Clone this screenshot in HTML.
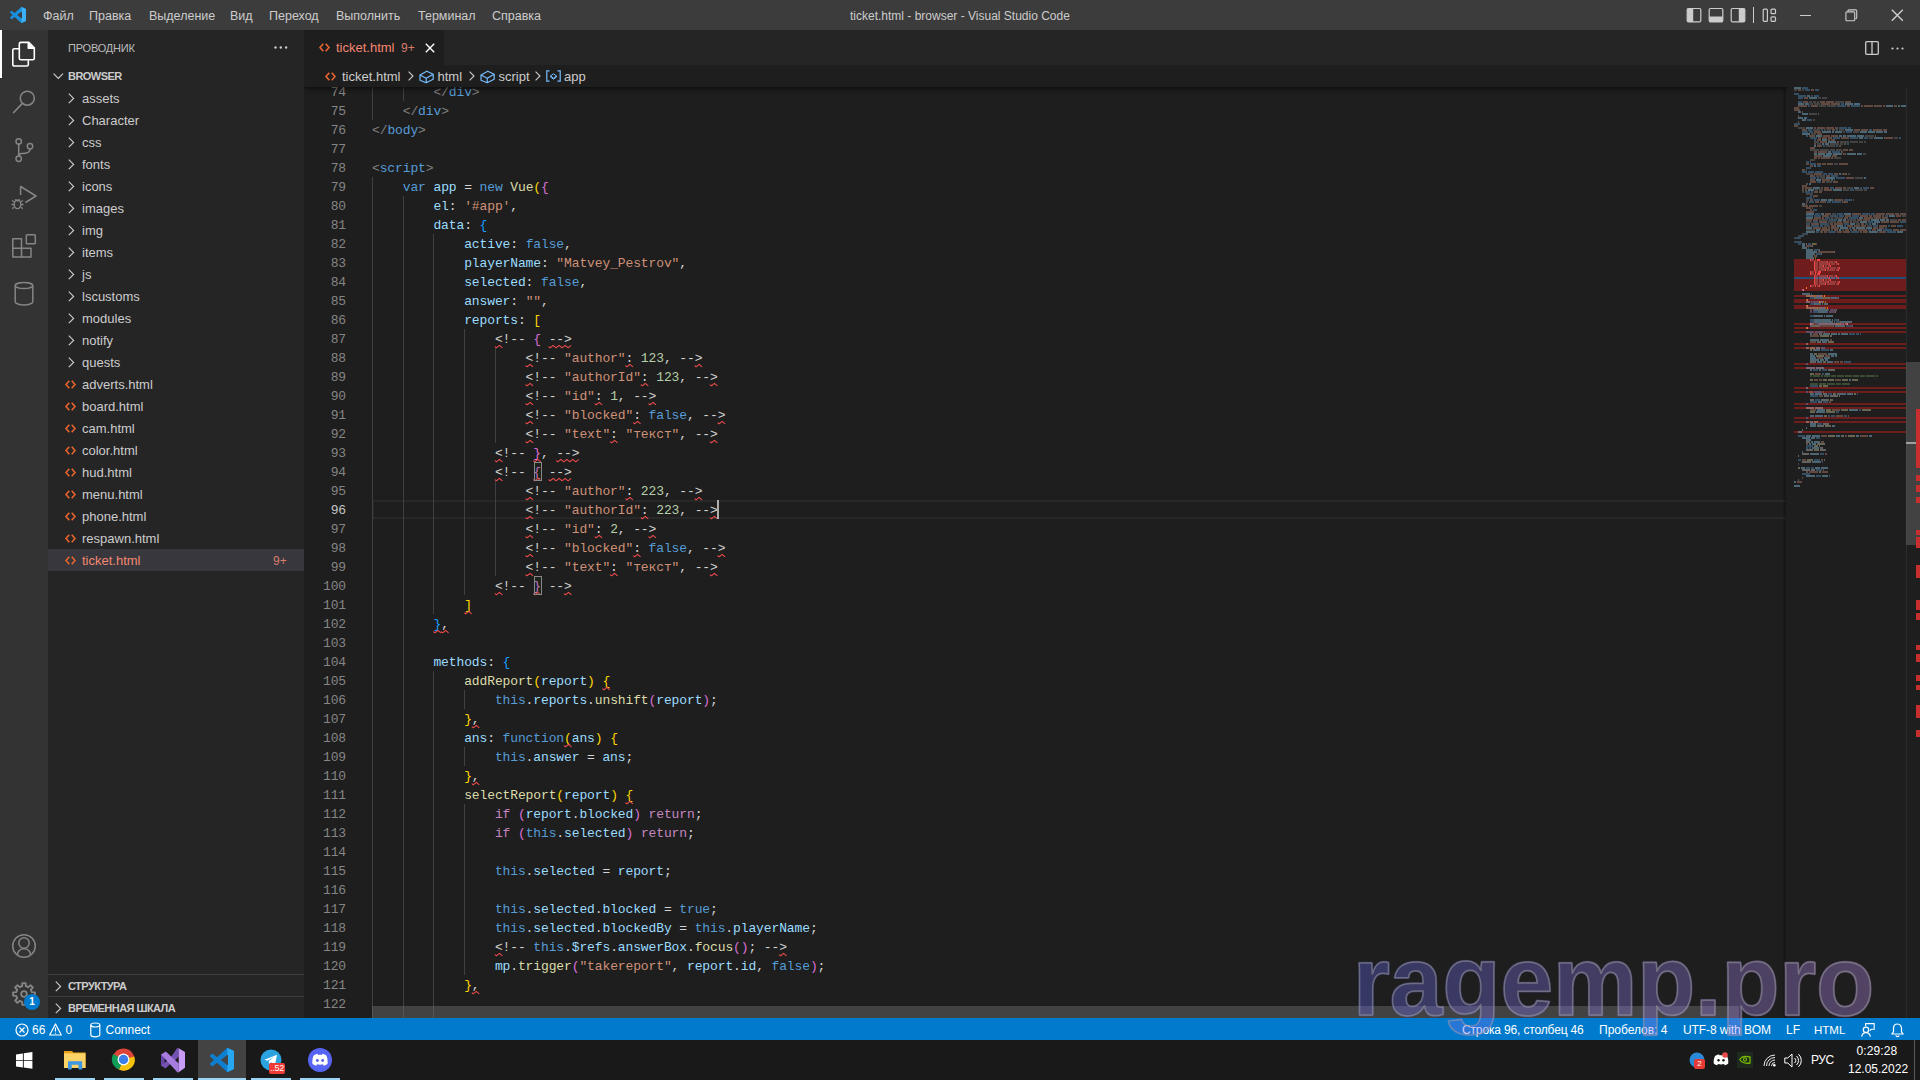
<!DOCTYPE html><html><head><meta charset="utf-8"><style>
*{box-sizing:border-box;margin:0;padding:0}
html,body{width:1920px;height:1080px;overflow:hidden;background:#1e1e1e;font-family:"Liberation Sans",sans-serif;color:#cccccc}
.abs{position:absolute}
svg{position:absolute;overflow:visible}
.t{position:absolute;white-space:nowrap}
#title{left:0;top:0;width:1920px;height:30px;background:#3c3c3c;font-size:12.5px;color:#cccccc}
#act{left:0;top:30px;width:48px;height:988px;background:#333333}
#side{left:48px;top:30px;width:256px;height:988px;background:#252526;font-size:13px;color:#cccccc}
#tabs{left:304px;top:30px;width:1616px;height:35px;background:#252526}
#crumbs{left:304px;top:65px;width:1616px;height:22px;background:#1e1e1e;font-size:13px;color:#cccccc}
#editor{left:304px;top:87px;width:1616px;height:931px;background:#1e1e1e;overflow:hidden}
.ln{position:absolute;left:0;width:42px;text-align:right;height:19px;line-height:19px;font-family:"Liberation Mono",monospace;font-size:13px;color:#858585;letter-spacing:-0.12px}
.ln.act{color:#c6c6c6}
.cl{position:absolute;height:19px;line-height:19px;white-space:pre;font-family:"Liberation Mono",monospace;font-size:13px;letter-spacing:-0.12px;color:#d4d4d4}
.ig{position:absolute;width:1px;height:19px;background:#404040}
.p{color:#d4d4d4}.tb{color:#808080}.tag{color:#569cd6}.kw{color:#569cd6}.ctl{color:#c586c0}.var{color:#9cdcfe}
.fn{color:#dcdcaa}.str{color:#ce9178}.num{color:#b5cea8}.b1{color:#ffd700}.b2{color:#da70d6}.b3{color:#179fff}
#status{left:0;top:1018px;width:1920px;height:22px;background:#007acc;color:#fff;font-size:12px}
#task{left:0;top:1040px;width:1920px;height:40px;background:#191919}
</style></head><body>
<div id="title" class="abs">
<svg style="left:10px;top:7px" width="16" height="16" viewBox="0 0 100 100"><defs><clipPath id="vcr1"><rect x="72" y="0" width="30" height="100"/></clipPath></defs><path fill="#1a8fdd" d="M96.46 10.8 75.86.87a6.23 6.23 0 0 0-7.1 1.2L29.35 38.04 12.19 25.01a4.16 4.16 0 0 0-5.32.24L1.36 30.26a4.17 4.17 0 0 0 0 6.16L16.24 50 1.36 63.58a4.17 4.17 0 0 0 0 6.16l5.51 5.01a4.16 4.16 0 0 0 5.32.24l17.16-13.03 39.41 35.97a6.23 6.23 0 0 0 7.1 1.2l20.6-9.92A6.25 6.25 0 0 0 100 83.6V16.4a6.25 6.25 0 0 0-3.54-5.6zM75.02 72.7 45.11 50l29.91-22.7z"/><path fill="#3bb0f5" clip-path="url(#vcr1)" d="M96.46 10.8 75.86.87a6.23 6.23 0 0 0-7.1 1.2L29.35 38.04 12.19 25.01a4.16 4.16 0 0 0-5.32.24L1.36 30.26a4.17 4.17 0 0 0 0 6.16L16.24 50 1.36 63.58a4.17 4.17 0 0 0 0 6.16l5.51 5.01a4.16 4.16 0 0 0 5.32.24l17.16-13.03 39.41 35.97a6.23 6.23 0 0 0 7.1 1.2l20.6-9.92A6.25 6.25 0 0 0 100 83.6V16.4a6.25 6.25 0 0 0-3.54-5.6zM75.02 72.7 45.11 50l29.91-22.7z"/></svg>
<div class="t" style="left:43.0px;top:6.0px;height:20px;line-height:20px;font-size:12.5px">Файл</div>
<div class="t" style="left:89.0px;top:6.0px;height:20px;line-height:20px;font-size:12.5px">Правка</div>
<div class="t" style="left:149.0px;top:6.0px;height:20px;line-height:20px;font-size:12.5px">Выделение</div>
<div class="t" style="left:230.0px;top:6.0px;height:20px;line-height:20px;font-size:12.5px">Вид</div>
<div class="t" style="left:269.0px;top:6.0px;height:20px;line-height:20px;font-size:12.5px">Переход</div>
<div class="t" style="left:336.0px;top:6.0px;height:20px;line-height:20px;font-size:12.5px">Выполнить</div>
<div class="t" style="left:418.0px;top:6.0px;height:20px;line-height:20px;font-size:12.5px">Терминал</div>
<div class="t" style="left:492.0px;top:6.0px;height:20px;line-height:20px;font-size:12.5px">Справка</div>
<div class="t" style="left:850.0px;top:6.0px;height:20px;line-height:20px;font-size:12.0px">ticket.html - browser - Visual Studio Code</div>
<svg style="left:1686px;top:7px" width="16" height="16" viewBox="0 0 16 16"><rect x="1.2" y="1.5" width="13.6" height="13.4" rx="1.3" fill="none" stroke="#cccccc" stroke-width="1.2"/><rect x="1.2" y="1.5" width="6" height="13.4" fill="#cccccc"/></svg>
<svg style="left:1708px;top:7px" width="16" height="16" viewBox="0 0 16 16"><rect x="1.2" y="1.5" width="13.6" height="13.4" rx="1.3" fill="none" stroke="#cccccc" stroke-width="1.2"/><rect x="1.2" y="9.5" width="13.6" height="5.4" fill="#cccccc"/></svg>
<svg style="left:1730px;top:7px" width="16" height="16" viewBox="0 0 16 16"><rect x="1.2" y="1.5" width="13.6" height="13.4" rx="1.3" fill="none" stroke="#cccccc" stroke-width="1.2"/><rect x="8.8" y="1.5" width="6" height="13.4" fill="#cccccc"/></svg>
<div class="abs" style="left:1753px;top:7px;width:1px;height:16px;background:#cccccc"></div>
<svg style="left:1762px;top:7px" width="16" height="16" viewBox="0 0 16 16"><rect x="1.2" y="2.2" width="4.2" height="12.2" rx="1" fill="none" stroke="#cccccc" stroke-width="1.2"/><rect x="9" y="2.2" width="4.5" height="4.5" rx="1" fill="none" stroke="#cccccc" stroke-width="1.2"/><rect x="9" y="9.8" width="4.5" height="4.5" rx="1" fill="none" stroke="#cccccc" stroke-width="1.2"/></svg>
<div class="abs" style="left:1800px;top:15px;width:11px;height:1px;background:#cccccc"></div>
<svg style="left:1845px;top:9px" width="13" height="13" viewBox="0 0 13 13"><rect x="0.9" y="2.9" width="8.8" height="8.8" rx="1" fill="none" stroke="#cccccc" stroke-width="1.1"/><path d="M2.9 2.4 V1.9 A1 1 0 0 1 3.9 0.9 H10.7 A1 1 0 0 1 11.7 1.9 V8.7 A1 1 0 0 1 10.7 9.7 H10.2" fill="none" stroke="#cccccc" stroke-width="1.1"/></svg>
<svg style="left:1891px;top:9px" width="13" height="13" viewBox="0 0 13 13"><path d="M0.8 0.8 L11.8 11.8 M11.8 0.8 L0.8 11.8" stroke="#cccccc" stroke-width="1.4"/></svg>
</div>
<div id="act" class="abs">
<div class="abs" style="left:0;top:0;width:2px;height:48px;background:#fff"></div>
<svg style="left:12px;top:12px" width="24" height="24" viewBox="0 0 24 24"><path d="M7.5 6.8 H2.3 A1.5 1.5 0 0 0 0.8 8.3 V22.5 A1.5 1.5 0 0 0 2.3 24 H14.8 A1.5 1.5 0 0 0 16.3 22.5 V18.2" fill="none" stroke="#ffffff" stroke-width="1.6"/><path d="M8.8 0.4 H16.8 L22.3 5.9 V16.2 A1.5 1.5 0 0 1 20.8 17.7 H8.8 A1.5 1.5 0 0 1 7.3 16.2 V1.9 A1.5 1.5 0 0 1 8.8 0.4 Z M16.3 0.6 V6.3 H22" fill="none" stroke="#ffffff" stroke-width="1.6" stroke-linejoin="round"/><path d="M16.3 0.6 L22 6.3 H16.3 Z" fill="#ffffff"/></svg>
<svg style="left:12px;top:60px" width="24" height="24" viewBox="0 0 24 24"><circle cx="15.3" cy="8.2" r="7" fill="none" stroke="#858585" stroke-width="1.6"/><path d="M10.4 13.3 L1.2 23" stroke="#858585" stroke-width="1.7"/></svg>
<svg style="left:12px;top:108px" width="24" height="24" viewBox="0 0 24 24"><circle cx="6.7" cy="3.4" r="2.7" fill="none" stroke="#858585" stroke-width="1.5"/><circle cx="6.7" cy="20.7" r="2.7" fill="none" stroke="#858585" stroke-width="1.5"/><circle cx="18" cy="8.2" r="2.7" fill="none" stroke="#858585" stroke-width="1.5"/><path d="M6.7 6.1 V18 M18 10.9 C18 14.5 15 15.5 10 15.5 C8 15.5 6.7 16.5 6.7 18" fill="none" stroke="#858585" stroke-width="1.5"/></svg>
<svg style="left:12px;top:156px" width="24" height="24" viewBox="0 0 24 24"><path d="M8.6 9 V0.5 L24 10 L13.5 16.5" fill="none" stroke="#858585" stroke-width="1.5" stroke-linejoin="round"/><ellipse cx="5.5" cy="18.3" rx="3.3" ry="4.3" fill="none" stroke="#858585" stroke-width="1.4"/><path d="M0 14.5 L2.3 15.8 M11 14.5 L8.7 15.8 M-0.5 18.5 H2.2 M11.5 18.5 H8.8 M0 22.5 L2.3 21.3 M11 22.5 L8.7 21.3 M3 13.5 L5.5 15 L8 13.5" fill="none" stroke="#858585" stroke-width="1.3"/></svg>
<svg style="left:12px;top:204px" width="24" height="24" viewBox="0 0 24 24"><path d="M0.8 4.8 H9.5 V14.2 H19 V23 H0.8 Z M0.8 14.2 H9.5 V23" fill="none" stroke="#858585" stroke-width="1.5" stroke-linejoin="round"/><rect x="14.3" y="0.8" width="9" height="9" rx="0.8" fill="none" stroke="#858585" stroke-width="1.5"/></svg>
<svg style="left:12px;top:252px" width="24" height="24" viewBox="0 0 24 24"><ellipse cx="12" cy="3.6" rx="8.8" ry="3" fill="none" stroke="#858585" stroke-width="1.5"/><path d="M3.2 3.6 V19.8 C3.2 21.6 7.2 23 12 23 C16.8 23 20.8 21.6 20.8 19.8 V3.6" fill="none" stroke="#858585" stroke-width="1.5"/></svg>
<svg style="left:12px;top:904px" width="24" height="24" viewBox="0 0 24 24"><circle cx="12" cy="12" r="11.3" fill="none" stroke="#858585" stroke-width="1.5"/><circle cx="12" cy="9" r="5.2" fill="none" stroke="#858585" stroke-width="1.5"/><path d="M5.3 20.8 C6 16.8 8.5 14.8 12 14.8 C15.5 14.8 18 16.8 18.7 20.8" fill="none" stroke="#858585" stroke-width="1.5"/></svg>
<svg style="left:12px;top:952px" width="24" height="24" viewBox="0 0 24 24"><path d="M10.13 4.22 L10.36 1.12 L13.64 1.12 L13.87 4.22 L16.18 5.18 L18.54 3.15 L20.85 5.46 L18.82 7.82 L19.78 10.13 L22.88 10.36 L22.88 13.64 L19.78 13.87 L18.82 16.18 L20.85 18.54 L18.54 20.85 L16.18 18.82 L13.87 19.78 L13.64 22.88 L10.36 22.88 L10.13 19.78 L7.82 18.82 L5.46 20.85 L3.15 18.54 L5.18 16.18 L4.22 13.87 L1.12 13.64 L1.12 10.36 L4.22 10.13 L5.18 7.82 L3.15 5.46 L5.46 3.15 L7.82 5.18 Z" fill="none" stroke="#858585" stroke-width="1.9" stroke-linejoin="round"/><circle cx="12" cy="12" r="2.8" fill="none" stroke="#858585" stroke-width="1.8"/></svg>
<div class="abs" style="left:24px;top:964px;width:16px;height:16px;border-radius:8px;background:#007acc;color:#fff;font-size:10px;font-weight:bold;line-height:16px;text-align:center">1</div>
</div>
<div id="side" class="abs">
<div class="t" style="left:20.0px;top:8.0px;height:20px;line-height:20px;font-size:11.0px;color:#bbbbbb;letter-spacing:-0.2px">ПРОВОДНИК</div>
<svg style="left:226px;top:16px" width="14" height="3" viewBox="0 0 14 3"><circle cx="1.5" cy="1.5" r="1.2" fill="#cccccc"/><circle cx="6.8" cy="1.5" r="1.2" fill="#cccccc"/><circle cx="12.1" cy="1.5" r="1.2" fill="#cccccc"/></svg>
<svg style="left:5px;top:43px" width="11" height="6" viewBox="0 0 11 6"><path d="M0.6 0.6 L5.3 5.3 L10 0.6" fill="none" stroke="#cccccc" stroke-width="1.2"/></svg>
<div class="t" style="left:20.0px;top:36.0px;height:20px;line-height:20px;font-size:11.0px;color:#cccccc;font-weight:bold;letter-spacing:-0.55px">BROWSER</div>
<svg style="left:20px;top:63px" width="7" height="11" viewBox="0 0 7 11"><path d="M0.8 0.6 L5.6 5.4 L0.8 10.2" fill="none" stroke="#cccccc" stroke-width="1.2"/></svg>
<div class="t" style="left:34.0px;top:58.5px;height:20px;line-height:20px;font-size:13.0px">assets</div>
<svg style="left:20px;top:85px" width="7" height="11" viewBox="0 0 7 11"><path d="M0.8 0.6 L5.6 5.4 L0.8 10.2" fill="none" stroke="#cccccc" stroke-width="1.2"/></svg>
<div class="t" style="left:34.0px;top:80.5px;height:20px;line-height:20px;font-size:13.0px">Character</div>
<svg style="left:20px;top:107px" width="7" height="11" viewBox="0 0 7 11"><path d="M0.8 0.6 L5.6 5.4 L0.8 10.2" fill="none" stroke="#cccccc" stroke-width="1.2"/></svg>
<div class="t" style="left:34.0px;top:102.5px;height:20px;line-height:20px;font-size:13.0px">css</div>
<svg style="left:20px;top:129px" width="7" height="11" viewBox="0 0 7 11"><path d="M0.8 0.6 L5.6 5.4 L0.8 10.2" fill="none" stroke="#cccccc" stroke-width="1.2"/></svg>
<div class="t" style="left:34.0px;top:124.5px;height:20px;line-height:20px;font-size:13.0px">fonts</div>
<svg style="left:20px;top:151px" width="7" height="11" viewBox="0 0 7 11"><path d="M0.8 0.6 L5.6 5.4 L0.8 10.2" fill="none" stroke="#cccccc" stroke-width="1.2"/></svg>
<div class="t" style="left:34.0px;top:146.5px;height:20px;line-height:20px;font-size:13.0px">icons</div>
<svg style="left:20px;top:173px" width="7" height="11" viewBox="0 0 7 11"><path d="M0.8 0.6 L5.6 5.4 L0.8 10.2" fill="none" stroke="#cccccc" stroke-width="1.2"/></svg>
<div class="t" style="left:34.0px;top:168.5px;height:20px;line-height:20px;font-size:13.0px">images</div>
<svg style="left:20px;top:195px" width="7" height="11" viewBox="0 0 7 11"><path d="M0.8 0.6 L5.6 5.4 L0.8 10.2" fill="none" stroke="#cccccc" stroke-width="1.2"/></svg>
<div class="t" style="left:34.0px;top:190.5px;height:20px;line-height:20px;font-size:13.0px">img</div>
<svg style="left:20px;top:217px" width="7" height="11" viewBox="0 0 7 11"><path d="M0.8 0.6 L5.6 5.4 L0.8 10.2" fill="none" stroke="#cccccc" stroke-width="1.2"/></svg>
<div class="t" style="left:34.0px;top:212.5px;height:20px;line-height:20px;font-size:13.0px">items</div>
<svg style="left:20px;top:239px" width="7" height="11" viewBox="0 0 7 11"><path d="M0.8 0.6 L5.6 5.4 L0.8 10.2" fill="none" stroke="#cccccc" stroke-width="1.2"/></svg>
<div class="t" style="left:34.0px;top:234.5px;height:20px;line-height:20px;font-size:13.0px">js</div>
<svg style="left:20px;top:261px" width="7" height="11" viewBox="0 0 7 11"><path d="M0.8 0.6 L5.6 5.4 L0.8 10.2" fill="none" stroke="#cccccc" stroke-width="1.2"/></svg>
<div class="t" style="left:34.0px;top:256.5px;height:20px;line-height:20px;font-size:13.0px">lscustoms</div>
<svg style="left:20px;top:283px" width="7" height="11" viewBox="0 0 7 11"><path d="M0.8 0.6 L5.6 5.4 L0.8 10.2" fill="none" stroke="#cccccc" stroke-width="1.2"/></svg>
<div class="t" style="left:34.0px;top:278.5px;height:20px;line-height:20px;font-size:13.0px">modules</div>
<svg style="left:20px;top:305px" width="7" height="11" viewBox="0 0 7 11"><path d="M0.8 0.6 L5.6 5.4 L0.8 10.2" fill="none" stroke="#cccccc" stroke-width="1.2"/></svg>
<div class="t" style="left:34.0px;top:300.5px;height:20px;line-height:20px;font-size:13.0px">notify</div>
<svg style="left:20px;top:327px" width="7" height="11" viewBox="0 0 7 11"><path d="M0.8 0.6 L5.6 5.4 L0.8 10.2" fill="none" stroke="#cccccc" stroke-width="1.2"/></svg>
<div class="t" style="left:34.0px;top:322.5px;height:20px;line-height:20px;font-size:13.0px">quests</div>
<svg style="left:17px;top:350px" width="11" height="9" viewBox="0 0 11 9"><path d="M4.3 0.8 L1 4.5 L4.3 8.2 M6.7 0.8 L10 4.5 L6.7 8.2" fill="none" stroke="#e8642c" stroke-width="1.6" stroke-linecap="butt" stroke-linejoin="miter"/></svg>
<div class="t" style="left:34.0px;top:344.5px;height:20px;line-height:20px;font-size:13.0px">adverts.html</div>
<svg style="left:17px;top:372px" width="11" height="9" viewBox="0 0 11 9"><path d="M4.3 0.8 L1 4.5 L4.3 8.2 M6.7 0.8 L10 4.5 L6.7 8.2" fill="none" stroke="#e8642c" stroke-width="1.6" stroke-linecap="butt" stroke-linejoin="miter"/></svg>
<div class="t" style="left:34.0px;top:366.5px;height:20px;line-height:20px;font-size:13.0px">board.html</div>
<svg style="left:17px;top:394px" width="11" height="9" viewBox="0 0 11 9"><path d="M4.3 0.8 L1 4.5 L4.3 8.2 M6.7 0.8 L10 4.5 L6.7 8.2" fill="none" stroke="#e8642c" stroke-width="1.6" stroke-linecap="butt" stroke-linejoin="miter"/></svg>
<div class="t" style="left:34.0px;top:388.5px;height:20px;line-height:20px;font-size:13.0px">cam.html</div>
<svg style="left:17px;top:416px" width="11" height="9" viewBox="0 0 11 9"><path d="M4.3 0.8 L1 4.5 L4.3 8.2 M6.7 0.8 L10 4.5 L6.7 8.2" fill="none" stroke="#e8642c" stroke-width="1.6" stroke-linecap="butt" stroke-linejoin="miter"/></svg>
<div class="t" style="left:34.0px;top:410.5px;height:20px;line-height:20px;font-size:13.0px">color.html</div>
<svg style="left:17px;top:438px" width="11" height="9" viewBox="0 0 11 9"><path d="M4.3 0.8 L1 4.5 L4.3 8.2 M6.7 0.8 L10 4.5 L6.7 8.2" fill="none" stroke="#e8642c" stroke-width="1.6" stroke-linecap="butt" stroke-linejoin="miter"/></svg>
<div class="t" style="left:34.0px;top:432.5px;height:20px;line-height:20px;font-size:13.0px">hud.html</div>
<svg style="left:17px;top:460px" width="11" height="9" viewBox="0 0 11 9"><path d="M4.3 0.8 L1 4.5 L4.3 8.2 M6.7 0.8 L10 4.5 L6.7 8.2" fill="none" stroke="#e8642c" stroke-width="1.6" stroke-linecap="butt" stroke-linejoin="miter"/></svg>
<div class="t" style="left:34.0px;top:454.5px;height:20px;line-height:20px;font-size:13.0px">menu.html</div>
<svg style="left:17px;top:482px" width="11" height="9" viewBox="0 0 11 9"><path d="M4.3 0.8 L1 4.5 L4.3 8.2 M6.7 0.8 L10 4.5 L6.7 8.2" fill="none" stroke="#e8642c" stroke-width="1.6" stroke-linecap="butt" stroke-linejoin="miter"/></svg>
<div class="t" style="left:34.0px;top:476.5px;height:20px;line-height:20px;font-size:13.0px">phone.html</div>
<svg style="left:17px;top:504px" width="11" height="9" viewBox="0 0 11 9"><path d="M4.3 0.8 L1 4.5 L4.3 8.2 M6.7 0.8 L10 4.5 L6.7 8.2" fill="none" stroke="#e8642c" stroke-width="1.6" stroke-linecap="butt" stroke-linejoin="miter"/></svg>
<div class="t" style="left:34.0px;top:498.5px;height:20px;line-height:20px;font-size:13.0px">respawn.html</div>
<div class="abs" style="left:0;top:519px;width:256px;height:22px;background:#37373d"></div>
<svg style="left:17px;top:526px" width="11" height="9" viewBox="0 0 11 9"><path d="M4.3 0.8 L1 4.5 L4.3 8.2 M6.7 0.8 L10 4.5 L6.7 8.2" fill="none" stroke="#e8642c" stroke-width="1.6" stroke-linecap="butt" stroke-linejoin="miter"/></svg>
<div class="t" style="left:34.0px;top:520.5px;height:20px;line-height:20px;font-size:13.0px;color:#f48771">ticket.html</div>
<div class="t" style="left:225.0px;top:520.5px;height:20px;line-height:20px;font-size:12.0px;color:#d77b6b">9+</div>
<div class="abs" style="left:0;top:944px;width:256px;height:1px;background:#3c3c3c"></div>
<svg style="left:7px;top:951px" width="7" height="11" viewBox="0 0 7 11"><path d="M0.8 0.6 L5.6 5.4 L0.8 10.2" fill="none" stroke="#cccccc" stroke-width="1.2"/></svg>
<div class="t" style="left:20.0px;top:946.0px;height:20px;line-height:20px;font-size:11.0px;color:#cccccc;font-weight:bold;letter-spacing:-0.55px">СТРУКТУРА</div>
<div class="abs" style="left:0;top:966px;width:256px;height:1px;background:#3c3c3c"></div>
<svg style="left:7px;top:973px" width="7" height="11" viewBox="0 0 7 11"><path d="M0.8 0.6 L5.6 5.4 L0.8 10.2" fill="none" stroke="#cccccc" stroke-width="1.2"/></svg>
<div class="t" style="left:20.0px;top:968.0px;height:20px;line-height:20px;font-size:11.0px;color:#cccccc;font-weight:bold;letter-spacing:-0.55px">ВРЕМЕННАЯ ШКАЛА</div>
</div>
<div id="tabs" class="abs">
<div class="abs" style="left:0;top:0;width:140px;height:35px;background:#1e1e1e"></div>
<svg style="left:15px;top:13px" width="11" height="9" viewBox="0 0 11 9"><path d="M4.3 0.8 L1 4.5 L4.3 8.2 M6.7 0.8 L10 4.5 L6.7 8.2" fill="none" stroke="#e8642c" stroke-width="1.6" stroke-linecap="butt" stroke-linejoin="miter"/></svg>
<div class="t" style="left:32.0px;top:7.5px;height:20px;line-height:20px;font-size:13.0px;color:#f48771">ticket.html</div>
<div class="t" style="left:97.0px;top:7.5px;height:20px;line-height:20px;font-size:12.0px;color:#d77b6b">9+</div>
<svg style="left:120.5px;top:13px" width="10" height="10" viewBox="0 0 10 10"><path d="M0.8 0.8 L9.2 9.2 M9.2 0.8 L0.8 9.2" stroke="#ffffff" stroke-width="1.4"/></svg>
<svg style="left:1561px;top:11px" width="14" height="14" viewBox="0 0 14 14"><rect x="0.7" y="0.7" width="12.6" height="12.6" rx="1" fill="none" stroke="#cccccc" stroke-width="1.3"/><path d="M7 0.7 V13.3" stroke="#cccccc" stroke-width="1.3"/></svg>
<svg style="left:1587px;top:17px" width="13" height="3" viewBox="0 0 13 3"><circle cx="1.5" cy="1.5" r="1.1" fill="#cccccc"/><circle cx="6.5" cy="1.5" r="1.1" fill="#cccccc"/><circle cx="11.5" cy="1.5" r="1.1" fill="#cccccc"/></svg>
</div>
<div id="crumbs" class="abs">
<svg style="left:21px;top:7px" width="11" height="9" viewBox="0 0 11 9"><path d="M4.3 0.8 L1 4.5 L4.3 8.2 M6.7 0.8 L10 4.5 L6.7 8.2" fill="none" stroke="#e8642c" stroke-width="1.6" stroke-linecap="butt" stroke-linejoin="miter"/></svg>
<div class="t" style="left:38.0px;top:1.5px;height:20px;line-height:20px;font-size:13.0px">ticket.html</div>
<svg style="left:104px;top:6px" width="6" height="10" viewBox="0 0 6 10"><path d="M0.6 0.6 L5 5 L0.6 9.4" fill="none" stroke="#cccccc" stroke-width="1.1"/></svg>
<svg style="left:115px;top:5px" width="15" height="14" viewBox="0 0 15 14"><path d="M1 5 L7.8 1.2 L14.2 4.2 V9.2 L7.2 12.8 L1 10.2 Z M1 5 L7.2 8.3 L14.2 4.2 M7.2 8.3 V12.8" fill="none" stroke="#75beff" stroke-width="1.2" stroke-linejoin="round"/></svg>
<div class="t" style="left:133.5px;top:1.5px;height:20px;line-height:20px;font-size:13.0px">html</div>
<svg style="left:165px;top:6px" width="6" height="10" viewBox="0 0 6 10"><path d="M0.6 0.6 L5 5 L0.6 9.4" fill="none" stroke="#cccccc" stroke-width="1.1"/></svg>
<svg style="left:176px;top:5px" width="15" height="14" viewBox="0 0 15 14"><path d="M1 5 L7.8 1.2 L14.2 4.2 V9.2 L7.2 12.8 L1 10.2 Z M1 5 L7.2 8.3 L14.2 4.2 M7.2 8.3 V12.8" fill="none" stroke="#75beff" stroke-width="1.2" stroke-linejoin="round"/></svg>
<div class="t" style="left:194.5px;top:1.5px;height:20px;line-height:20px;font-size:13.0px">script</div>
<svg style="left:231px;top:6px" width="6" height="10" viewBox="0 0 6 10"><path d="M0.6 0.6 L5 5 L0.6 9.4" fill="none" stroke="#cccccc" stroke-width="1.1"/></svg>
<svg style="left:242px;top:5px" width="15" height="12" viewBox="0 0 15 12"><path d="M3.5 0.8 H0.8 V11.2 H3.5 M11.5 0.8 H14.2 V11.2 H11.5" fill="none" stroke="#75beff" stroke-width="1.2"/><path d="M4.5 6 L7.5 3.8 L10.5 6 L7.5 8.2 Z M4.5 6 V7 L7.5 9.2 L10.5 7 V6" fill="none" stroke="#75beff" stroke-width="1"/></svg>
<div class="t" style="left:260.0px;top:1.5px;height:20px;line-height:20px;font-size:13.0px">app</div>
</div>
<div id="editor" class="abs">
<div class="abs" style="left:68px;top:413px;width:1414px;height:19px;border:2px solid #282828;border-right:none"></div>
<div class="ln" style="top:-4px">74</div>
<div class="ig" style="top:-5px;left:68.0px"></div>
<div class="ig" style="top:-5px;left:98.7px"></div>
<div class="cl" style="top:-4px;left:129.44px"><span class="tb">&lt;/</span><span class="tag">div</span><span class="tb">&gt;</span></div>
<div class="ln" style="top:15px">75</div>
<div class="ig" style="top:14px;left:68.0px"></div>
<div class="cl" style="top:15px;left:98.72px"><span class="tb">&lt;/</span><span class="tag">div</span><span class="tb">&gt;</span></div>
<div class="ln" style="top:34px">76</div>
<div class="cl" style="top:34px;left:68.00px"><span class="tb">&lt;/</span><span class="tag">body</span><span class="tb">&gt;</span></div>
<div class="ln" style="top:53px">77</div>
<div class="cl" style="top:53px;left:68.00px"></div>
<div class="ln" style="top:72px">78</div>
<div class="cl" style="top:72px;left:68.00px"><span class="tb">&lt;</span><span class="tag">script</span><span class="tb">&gt;</span></div>
<div class="ln" style="top:91px">79</div>
<div class="ig" style="top:90px;left:68.0px"></div>
<div class="cl" style="top:91px;left:98.72px"><span class="kw">var</span><span class="p"> </span><span class="var">app</span><span class="p"> = </span><span class="kw">new</span><span class="p"> </span><span class="fn">Vue</span><span class="b1">(</span><span class="b2">{</span></div>
<div class="ln" style="top:110px">80</div>
<div class="ig" style="top:109px;left:68.0px"></div>
<div class="ig" style="top:109px;left:98.7px"></div>
<div class="cl" style="top:110px;left:129.44px"><span class="var">el</span><span class="p">: </span><span class="str">&#x27;#app&#x27;</span><span class="p">,</span></div>
<div class="ln" style="top:129px">81</div>
<div class="ig" style="top:128px;left:68.0px"></div>
<div class="ig" style="top:128px;left:98.7px"></div>
<div class="cl" style="top:129px;left:129.44px"><span class="var">data</span><span class="p">: </span><span class="b3">{</span></div>
<div class="ln" style="top:148px">82</div>
<div class="ig" style="top:147px;left:68.0px"></div>
<div class="ig" style="top:147px;left:98.7px"></div>
<div class="ig" style="top:147px;left:129.4px"></div>
<div class="cl" style="top:148px;left:160.16px"><span class="var">active</span><span class="p">: </span><span class="kw">false</span><span class="p">,</span></div>
<div class="ln" style="top:167px">83</div>
<div class="ig" style="top:166px;left:68.0px"></div>
<div class="ig" style="top:166px;left:98.7px"></div>
<div class="ig" style="top:166px;left:129.4px"></div>
<div class="cl" style="top:167px;left:160.16px"><span class="var">playerName</span><span class="p">: </span><span class="str">&quot;Matvey_Pestrov&quot;</span><span class="p">,</span></div>
<div class="ln" style="top:186px">84</div>
<div class="ig" style="top:185px;left:68.0px"></div>
<div class="ig" style="top:185px;left:98.7px"></div>
<div class="ig" style="top:185px;left:129.4px"></div>
<div class="cl" style="top:186px;left:160.16px"><span class="var">selected</span><span class="p">: </span><span class="kw">false</span><span class="p">,</span></div>
<div class="ln" style="top:205px">85</div>
<div class="ig" style="top:204px;left:68.0px"></div>
<div class="ig" style="top:204px;left:98.7px"></div>
<div class="ig" style="top:204px;left:129.4px"></div>
<div class="cl" style="top:205px;left:160.16px"><span class="var">answer</span><span class="p">: </span><span class="str">&quot;&quot;</span><span class="p">,</span></div>
<div class="ln" style="top:224px">86</div>
<div class="ig" style="top:223px;left:68.0px"></div>
<div class="ig" style="top:223px;left:98.7px"></div>
<div class="ig" style="top:223px;left:129.4px"></div>
<div class="cl" style="top:224px;left:160.16px"><span class="var">reports</span><span class="p">: </span><span class="b1">[</span></div>
<div class="ln" style="top:243px">87</div>
<div class="ig" style="top:242px;left:68.0px"></div>
<div class="ig" style="top:242px;left:98.7px"></div>
<div class="ig" style="top:242px;left:129.4px"></div>
<div class="ig" style="top:242px;left:160.2px"></div>
<div class="cl" style="top:243px;left:190.88px"><span class="p">&lt;</span><span class="p">!-- </span><span class="b2">{</span><span class="p"> </span><span class="p">--&gt;</span></div>
<div class="sq" style="top:257px;left:190.9px;width:7.7px"></div>
<div class="sq" style="top:257px;left:244.6px;width:23.0px"></div>
<div class="ln" style="top:262px">88</div>
<div class="ig" style="top:261px;left:68.0px"></div>
<div class="ig" style="top:261px;left:98.7px"></div>
<div class="ig" style="top:261px;left:129.4px"></div>
<div class="ig" style="top:261px;left:160.2px"></div>
<div class="ig" style="top:261px;left:190.9px"></div>
<div class="cl" style="top:262px;left:221.60px"><span class="p">&lt;</span><span class="p">!-- </span><span class="str">&quot;author&quot;</span><span class="p">:</span><span class="p"> </span><span class="num">123</span><span class="p">, --</span><span class="p">&gt;</span></div>
<div class="sq" style="top:276px;left:221.6px;width:7.7px"></div>
<div class="sq" style="top:276px;left:321.4px;width:7.7px"></div>
<div class="sq" style="top:276px;left:390.6px;width:7.7px"></div>
<div class="ln" style="top:281px">89</div>
<div class="ig" style="top:280px;left:68.0px"></div>
<div class="ig" style="top:280px;left:98.7px"></div>
<div class="ig" style="top:280px;left:129.4px"></div>
<div class="ig" style="top:280px;left:160.2px"></div>
<div class="ig" style="top:280px;left:190.9px"></div>
<div class="cl" style="top:281px;left:221.60px"><span class="p">&lt;</span><span class="p">!-- </span><span class="str">&quot;authorId&quot;</span><span class="p">:</span><span class="p"> </span><span class="num">123</span><span class="p">, --</span><span class="p">&gt;</span></div>
<div class="sq" style="top:295px;left:221.6px;width:7.7px"></div>
<div class="sq" style="top:295px;left:336.8px;width:7.7px"></div>
<div class="sq" style="top:295px;left:405.9px;width:7.7px"></div>
<div class="ln" style="top:300px">90</div>
<div class="ig" style="top:299px;left:68.0px"></div>
<div class="ig" style="top:299px;left:98.7px"></div>
<div class="ig" style="top:299px;left:129.4px"></div>
<div class="ig" style="top:299px;left:160.2px"></div>
<div class="ig" style="top:299px;left:190.9px"></div>
<div class="cl" style="top:300px;left:221.60px"><span class="p">&lt;</span><span class="p">!-- </span><span class="str">&quot;id&quot;</span><span class="p">:</span><span class="p"> </span><span class="num">1</span><span class="p">, --</span><span class="p">&gt;</span></div>
<div class="sq" style="top:314px;left:221.6px;width:7.7px"></div>
<div class="sq" style="top:314px;left:290.7px;width:7.7px"></div>
<div class="sq" style="top:314px;left:344.5px;width:7.7px"></div>
<div class="ln" style="top:319px">91</div>
<div class="ig" style="top:318px;left:68.0px"></div>
<div class="ig" style="top:318px;left:98.7px"></div>
<div class="ig" style="top:318px;left:129.4px"></div>
<div class="ig" style="top:318px;left:160.2px"></div>
<div class="ig" style="top:318px;left:190.9px"></div>
<div class="cl" style="top:319px;left:221.60px"><span class="p">&lt;</span><span class="p">!-- </span><span class="str">&quot;blocked&quot;</span><span class="p">:</span><span class="p"> </span><span class="kw">false</span><span class="p">, --</span><span class="p">&gt;</span></div>
<div class="sq" style="top:333px;left:221.6px;width:7.7px"></div>
<div class="sq" style="top:333px;left:329.1px;width:7.7px"></div>
<div class="sq" style="top:333px;left:413.6px;width:7.7px"></div>
<div class="ln" style="top:338px">92</div>
<div class="ig" style="top:337px;left:68.0px"></div>
<div class="ig" style="top:337px;left:98.7px"></div>
<div class="ig" style="top:337px;left:129.4px"></div>
<div class="ig" style="top:337px;left:160.2px"></div>
<div class="ig" style="top:337px;left:190.9px"></div>
<div class="cl" style="top:338px;left:221.60px"><span class="p">&lt;</span><span class="p">!-- </span><span class="str">&quot;text&quot;</span><span class="p">:</span><span class="p"> </span><span class="str">&quot;текст&quot;</span><span class="p">, --</span><span class="p">&gt;</span></div>
<div class="sq" style="top:352px;left:221.6px;width:7.7px"></div>
<div class="sq" style="top:352px;left:306.1px;width:7.7px"></div>
<div class="sq" style="top:352px;left:405.9px;width:7.7px"></div>
<div class="ln" style="top:357px">93</div>
<div class="ig" style="top:356px;left:68.0px"></div>
<div class="ig" style="top:356px;left:98.7px"></div>
<div class="ig" style="top:356px;left:129.4px"></div>
<div class="ig" style="top:356px;left:160.2px"></div>
<div class="cl" style="top:357px;left:190.88px"><span class="p">&lt;</span><span class="p">!-- </span><span class="b2">}</span><span class="p">,</span><span class="p"> </span><span class="p">--&gt;</span></div>
<div class="sq" style="top:371px;left:190.9px;width:7.7px"></div>
<div class="sq" style="top:371px;left:229.3px;width:7.7px"></div>
<div class="sq" style="top:371px;left:252.3px;width:23.0px"></div>
<div class="ln" style="top:376px">94</div>
<div class="ig" style="top:375px;left:68.0px"></div>
<div class="ig" style="top:375px;left:98.7px"></div>
<div class="ig" style="top:375px;left:129.4px"></div>
<div class="ig" style="top:375px;left:160.2px"></div>
<div class="cl" style="top:376px;left:190.88px"><span class="p">&lt;</span><span class="p">!-- </span><span class="b2 bm">{</span><span class="p"> </span><span class="p">--&gt;</span></div>
<div class="sq" style="top:390px;left:190.9px;width:7.7px"></div>
<div class="sq" style="top:390px;left:229.3px;width:7.7px"></div>
<div class="sq" style="top:390px;left:244.6px;width:23.0px"></div>
<div class="ln" style="top:395px">95</div>
<div class="ig" style="top:394px;left:68.0px"></div>
<div class="ig" style="top:394px;left:98.7px"></div>
<div class="ig" style="top:394px;left:129.4px"></div>
<div class="ig" style="top:394px;left:160.2px"></div>
<div class="ig" style="top:394px;left:190.9px"></div>
<div class="cl" style="top:395px;left:221.60px"><span class="p">&lt;</span><span class="p">!-- </span><span class="str">&quot;author&quot;</span><span class="p">:</span><span class="p"> </span><span class="num">223</span><span class="p">, --</span><span class="p">&gt;</span></div>
<div class="sq" style="top:409px;left:221.6px;width:7.7px"></div>
<div class="sq" style="top:409px;left:321.4px;width:7.7px"></div>
<div class="sq" style="top:409px;left:390.6px;width:7.7px"></div>
<div class="ln act" style="top:414px">96</div>
<div class="ig" style="top:413px;left:68.0px"></div>
<div class="ig" style="top:413px;left:98.7px"></div>
<div class="ig" style="top:413px;left:129.4px"></div>
<div class="ig" style="top:413px;left:160.2px"></div>
<div class="ig" style="top:413px;left:190.9px"></div>
<div class="cl" style="top:414px;left:221.60px"><span class="p">&lt;</span><span class="p">!-- </span><span class="str">&quot;authorId&quot;</span><span class="p">:</span><span class="p"> </span><span class="num">223</span><span class="p">, --</span><span class="p">&gt;</span></div>
<div class="sq" style="top:428px;left:221.6px;width:7.7px"></div>
<div class="sq" style="top:428px;left:336.8px;width:7.7px"></div>
<div class="sq" style="top:428px;left:405.9px;width:7.7px"></div>
<div class="ln" style="top:433px">97</div>
<div class="ig" style="top:432px;left:68.0px"></div>
<div class="ig" style="top:432px;left:98.7px"></div>
<div class="ig" style="top:432px;left:129.4px"></div>
<div class="ig" style="top:432px;left:160.2px"></div>
<div class="ig" style="top:432px;left:190.9px"></div>
<div class="cl" style="top:433px;left:221.60px"><span class="p">&lt;</span><span class="p">!-- </span><span class="str">&quot;id&quot;</span><span class="p">:</span><span class="p"> </span><span class="num">2</span><span class="p">, --</span><span class="p">&gt;</span></div>
<div class="sq" style="top:447px;left:221.6px;width:7.7px"></div>
<div class="sq" style="top:447px;left:290.7px;width:7.7px"></div>
<div class="sq" style="top:447px;left:344.5px;width:7.7px"></div>
<div class="ln" style="top:452px">98</div>
<div class="ig" style="top:451px;left:68.0px"></div>
<div class="ig" style="top:451px;left:98.7px"></div>
<div class="ig" style="top:451px;left:129.4px"></div>
<div class="ig" style="top:451px;left:160.2px"></div>
<div class="ig" style="top:451px;left:190.9px"></div>
<div class="cl" style="top:452px;left:221.60px"><span class="p">&lt;</span><span class="p">!-- </span><span class="str">&quot;blocked&quot;</span><span class="p">:</span><span class="p"> </span><span class="kw">false</span><span class="p">, --</span><span class="p">&gt;</span></div>
<div class="sq" style="top:466px;left:221.6px;width:7.7px"></div>
<div class="sq" style="top:466px;left:329.1px;width:7.7px"></div>
<div class="sq" style="top:466px;left:413.6px;width:7.7px"></div>
<div class="ln" style="top:471px">99</div>
<div class="ig" style="top:470px;left:68.0px"></div>
<div class="ig" style="top:470px;left:98.7px"></div>
<div class="ig" style="top:470px;left:129.4px"></div>
<div class="ig" style="top:470px;left:160.2px"></div>
<div class="ig" style="top:470px;left:190.9px"></div>
<div class="cl" style="top:471px;left:221.60px"><span class="p">&lt;</span><span class="p">!-- </span><span class="str">&quot;text&quot;</span><span class="p">:</span><span class="p"> </span><span class="str">&quot;текст&quot;</span><span class="p">, --</span><span class="p">&gt;</span></div>
<div class="sq" style="top:485px;left:221.6px;width:7.7px"></div>
<div class="sq" style="top:485px;left:306.1px;width:7.7px"></div>
<div class="sq" style="top:485px;left:405.9px;width:7.7px"></div>
<div class="ln" style="top:490px">100</div>
<div class="ig" style="top:489px;left:68.0px"></div>
<div class="ig" style="top:489px;left:98.7px"></div>
<div class="ig" style="top:489px;left:129.4px"></div>
<div class="ig" style="top:489px;left:160.2px"></div>
<div class="cl" style="top:490px;left:190.88px"><span class="p">&lt;</span><span class="p">!-- </span><span class="b2 bm">}</span><span class="p"> --</span><span class="p">&gt;</span></div>
<div class="sq" style="top:504px;left:190.9px;width:7.7px"></div>
<div class="sq" style="top:504px;left:229.3px;width:7.7px"></div>
<div class="sq" style="top:504px;left:260.0px;width:7.7px"></div>
<div class="ln" style="top:509px">101</div>
<div class="ig" style="top:508px;left:68.0px"></div>
<div class="ig" style="top:508px;left:98.7px"></div>
<div class="ig" style="top:508px;left:129.4px"></div>
<div class="cl" style="top:509px;left:160.16px"><span class="b1">]</span></div>
<div class="sq" style="top:523px;left:160.2px;width:7.7px"></div>
<div class="ln" style="top:528px">102</div>
<div class="ig" style="top:527px;left:68.0px"></div>
<div class="ig" style="top:527px;left:98.7px"></div>
<div class="cl" style="top:528px;left:129.44px"><span class="b3">}</span><span class="p">,</span></div>
<div class="sq" style="top:542px;left:129.4px;width:7.7px"></div>
<div class="sq" style="top:542px;left:137.1px;width:7.7px"></div>
<div class="ln" style="top:547px">103</div>
<div class="ig" style="top:546px;left:68.0px"></div>
<div class="ig" style="top:546px;left:98.7px"></div>
<div class="cl" style="top:547px;left:68.00px"></div>
<div class="ln" style="top:566px">104</div>
<div class="ig" style="top:565px;left:68.0px"></div>
<div class="ig" style="top:565px;left:98.7px"></div>
<div class="cl" style="top:566px;left:129.44px"><span class="var">methods</span><span class="p">: </span><span class="b3">{</span></div>
<div class="ln" style="top:585px">105</div>
<div class="ig" style="top:584px;left:68.0px"></div>
<div class="ig" style="top:584px;left:98.7px"></div>
<div class="ig" style="top:584px;left:129.4px"></div>
<div class="cl" style="top:585px;left:160.16px"><span class="fn">addReport</span><span class="b1">(</span><span class="var">report</span><span class="b1">)</span><span class="p"> </span><span class="b1">{</span></div>
<div class="sq" style="top:599px;left:298.4px;width:7.7px"></div>
<div class="ln" style="top:604px">106</div>
<div class="ig" style="top:603px;left:68.0px"></div>
<div class="ig" style="top:603px;left:98.7px"></div>
<div class="ig" style="top:603px;left:129.4px"></div>
<div class="ig" style="top:603px;left:160.2px"></div>
<div class="cl" style="top:604px;left:190.88px"><span class="kw">this</span><span class="p">.</span><span class="var">reports</span><span class="p">.</span><span class="fn">unshift</span><span class="b2">(</span><span class="var">report</span><span class="b2">)</span><span class="p">;</span></div>
<div class="ln" style="top:623px">107</div>
<div class="ig" style="top:622px;left:68.0px"></div>
<div class="ig" style="top:622px;left:98.7px"></div>
<div class="ig" style="top:622px;left:129.4px"></div>
<div class="cl" style="top:623px;left:160.16px"><span class="b1">}</span><span class="p">,</span></div>
<div class="sq" style="top:637px;left:167.8px;width:7.7px"></div>
<div class="ln" style="top:642px">108</div>
<div class="ig" style="top:641px;left:68.0px"></div>
<div class="ig" style="top:641px;left:98.7px"></div>
<div class="ig" style="top:641px;left:129.4px"></div>
<div class="cl" style="top:642px;left:160.16px"><span class="var">ans</span><span class="p">: </span><span class="kw">function</span><span class="b1">(</span><span class="var">ans</span><span class="b1">)</span><span class="p"> </span><span class="b1">{</span></div>
<div class="sq" style="top:656px;left:260.0px;width:7.7px"></div>
<div class="ln" style="top:661px">109</div>
<div class="ig" style="top:660px;left:68.0px"></div>
<div class="ig" style="top:660px;left:98.7px"></div>
<div class="ig" style="top:660px;left:129.4px"></div>
<div class="ig" style="top:660px;left:160.2px"></div>
<div class="cl" style="top:661px;left:190.88px"><span class="kw">this</span><span class="p">.</span><span class="var">answer</span><span class="p"> = </span><span class="var">ans</span><span class="p">;</span></div>
<div class="ln" style="top:680px">110</div>
<div class="ig" style="top:679px;left:68.0px"></div>
<div class="ig" style="top:679px;left:98.7px"></div>
<div class="ig" style="top:679px;left:129.4px"></div>
<div class="cl" style="top:680px;left:160.16px"><span class="b1">}</span><span class="p">,</span></div>
<div class="sq" style="top:694px;left:167.8px;width:7.7px"></div>
<div class="ln" style="top:699px">111</div>
<div class="ig" style="top:698px;left:68.0px"></div>
<div class="ig" style="top:698px;left:98.7px"></div>
<div class="ig" style="top:698px;left:129.4px"></div>
<div class="cl" style="top:699px;left:160.16px"><span class="fn">selectReport</span><span class="b1">(</span><span class="var">report</span><span class="b1">)</span><span class="p"> </span><span class="b1">{</span></div>
<div class="sq" style="top:713px;left:321.4px;width:7.7px"></div>
<div class="ln" style="top:718px">112</div>
<div class="ig" style="top:717px;left:68.0px"></div>
<div class="ig" style="top:717px;left:98.7px"></div>
<div class="ig" style="top:717px;left:129.4px"></div>
<div class="ig" style="top:717px;left:160.2px"></div>
<div class="cl" style="top:718px;left:190.88px"><span class="ctl">if</span><span class="p"> </span><span class="b2">(</span><span class="var">report</span><span class="p">.</span><span class="var">blocked</span><span class="b2">)</span><span class="p"> </span><span class="ctl">return</span><span class="p">;</span></div>
<div class="ln" style="top:737px">113</div>
<div class="ig" style="top:736px;left:68.0px"></div>
<div class="ig" style="top:736px;left:98.7px"></div>
<div class="ig" style="top:736px;left:129.4px"></div>
<div class="ig" style="top:736px;left:160.2px"></div>
<div class="cl" style="top:737px;left:190.88px"><span class="ctl">if</span><span class="p"> </span><span class="b2">(</span><span class="kw">this</span><span class="p">.</span><span class="var">selected</span><span class="b2">)</span><span class="p"> </span><span class="ctl">return</span><span class="p">;</span></div>
<div class="ln" style="top:756px">114</div>
<div class="ig" style="top:755px;left:68.0px"></div>
<div class="ig" style="top:755px;left:98.7px"></div>
<div class="ig" style="top:755px;left:129.4px"></div>
<div class="ig" style="top:755px;left:160.2px"></div>
<div class="cl" style="top:756px;left:68.00px"></div>
<div class="ln" style="top:775px">115</div>
<div class="ig" style="top:774px;left:68.0px"></div>
<div class="ig" style="top:774px;left:98.7px"></div>
<div class="ig" style="top:774px;left:129.4px"></div>
<div class="ig" style="top:774px;left:160.2px"></div>
<div class="cl" style="top:775px;left:190.88px"><span class="kw">this</span><span class="p">.</span><span class="var">selected</span><span class="p"> = </span><span class="var">report</span><span class="p">;</span></div>
<div class="ln" style="top:794px">116</div>
<div class="ig" style="top:793px;left:68.0px"></div>
<div class="ig" style="top:793px;left:98.7px"></div>
<div class="ig" style="top:793px;left:129.4px"></div>
<div class="ig" style="top:793px;left:160.2px"></div>
<div class="cl" style="top:794px;left:68.00px"></div>
<div class="ln" style="top:813px">117</div>
<div class="ig" style="top:812px;left:68.0px"></div>
<div class="ig" style="top:812px;left:98.7px"></div>
<div class="ig" style="top:812px;left:129.4px"></div>
<div class="ig" style="top:812px;left:160.2px"></div>
<div class="cl" style="top:813px;left:190.88px"><span class="kw">this</span><span class="p">.</span><span class="var">selected</span><span class="p">.</span><span class="var">blocked</span><span class="p"> = </span><span class="kw">true</span><span class="p">;</span></div>
<div class="ln" style="top:832px">118</div>
<div class="ig" style="top:831px;left:68.0px"></div>
<div class="ig" style="top:831px;left:98.7px"></div>
<div class="ig" style="top:831px;left:129.4px"></div>
<div class="ig" style="top:831px;left:160.2px"></div>
<div class="cl" style="top:832px;left:190.88px"><span class="kw">this</span><span class="p">.</span><span class="var">selected</span><span class="p">.</span><span class="var">blockedBy</span><span class="p"> = </span><span class="kw">this</span><span class="p">.</span><span class="var">playerName</span><span class="p">;</span></div>
<div class="ln" style="top:851px">119</div>
<div class="ig" style="top:850px;left:68.0px"></div>
<div class="ig" style="top:850px;left:98.7px"></div>
<div class="ig" style="top:850px;left:129.4px"></div>
<div class="ig" style="top:850px;left:160.2px"></div>
<div class="cl" style="top:851px;left:190.88px"><span class="p">&lt;</span><span class="p">!-- </span><span class="kw">this</span><span class="p">.</span><span class="var">$refs</span><span class="p">.</span><span class="var">answerBox</span><span class="p">.</span><span class="fn">focus</span><span class="b2">()</span><span class="p">; --</span><span class="p">&gt;</span></div>
<div class="sq" style="top:865px;left:190.9px;width:7.7px"></div>
<div class="sq" style="top:865px;left:475.0px;width:7.7px"></div>
<div class="ln" style="top:870px">120</div>
<div class="ig" style="top:869px;left:68.0px"></div>
<div class="ig" style="top:869px;left:98.7px"></div>
<div class="ig" style="top:869px;left:129.4px"></div>
<div class="ig" style="top:869px;left:160.2px"></div>
<div class="cl" style="top:870px;left:190.88px"><span class="var">mp</span><span class="p">.</span><span class="fn">trigger</span><span class="b2">(</span><span class="str">&quot;takereport&quot;</span><span class="p">, </span><span class="var">report</span><span class="p">.</span><span class="var">id</span><span class="p">, </span><span class="kw">false</span><span class="b2">)</span><span class="p">;</span></div>
<div class="ln" style="top:889px">121</div>
<div class="ig" style="top:888px;left:68.0px"></div>
<div class="ig" style="top:888px;left:98.7px"></div>
<div class="ig" style="top:888px;left:129.4px"></div>
<div class="cl" style="top:889px;left:160.16px"><span class="b1">}</span><span class="p">,</span></div>
<div class="sq" style="top:903px;left:167.8px;width:7.7px"></div>
<div class="ln" style="top:908px">122</div>
<div class="ig" style="top:907px;left:68.0px"></div>
<div class="ig" style="top:907px;left:98.7px"></div>
<div class="ig" style="top:907px;left:129.4px"></div>
<div class="cl" style="top:908px;left:68.00px"></div>
<div class="ig" style="top:926px;left:68.0px"></div>
<div class="ig" style="top:926px;left:98.7px"></div>
<div class="ig" style="top:926px;left:129.4px"></div>
<div class="cl" style="top:927px;left:68.00px"></div>
<svg style="left:0;top:0" width="1616" height="931"><defs><pattern id="sqp" x="0" y="0" width="6" height="3" patternUnits="userSpaceOnUse"><polygon points="5.5,0 2.5,3 1.1,3 4.1,0" fill="#f14c4c"/><polygon points="4,0 6,2 6,0.6 5.4,0" fill="#f14c4c"/><polygon points="0,2 1,3 2.4,3 0,0.6" fill="#f14c4c"/></pattern></defs><path d="M190.9 259.6 L192.4 260.8 L195.4 258.3 L198.4 260.8" fill="none" stroke="#f14c4c" stroke-width="1.1" stroke-linejoin="round"/><path d="M244.6 259.6 L246.1 260.8 L249.1 258.3 L252.1 260.8 L255.1 258.3 L258.1 260.8 L261.1 258.3 L264.1 260.8 L267.1 258.3" fill="none" stroke="#f14c4c" stroke-width="1.1" stroke-linejoin="round"/><path d="M221.6 278.6 L223.1 279.8 L226.1 277.3 L229.1 279.8" fill="none" stroke="#f14c4c" stroke-width="1.1" stroke-linejoin="round"/><path d="M321.4 278.6 L322.9 279.8 L325.9 277.3 L328.9 279.8" fill="none" stroke="#f14c4c" stroke-width="1.1" stroke-linejoin="round"/><path d="M390.6 278.6 L392.1 279.8 L395.1 277.3 L398.1 279.8" fill="none" stroke="#f14c4c" stroke-width="1.1" stroke-linejoin="round"/><path d="M221.6 297.6 L223.1 298.8 L226.1 296.3 L229.1 298.8" fill="none" stroke="#f14c4c" stroke-width="1.1" stroke-linejoin="round"/><path d="M336.8 297.6 L338.3 298.8 L341.3 296.3 L344.3 298.8" fill="none" stroke="#f14c4c" stroke-width="1.1" stroke-linejoin="round"/><path d="M405.9 297.6 L407.4 298.8 L410.4 296.3 L413.4 298.8" fill="none" stroke="#f14c4c" stroke-width="1.1" stroke-linejoin="round"/><path d="M221.6 316.6 L223.1 317.8 L226.1 315.3 L229.1 317.8" fill="none" stroke="#f14c4c" stroke-width="1.1" stroke-linejoin="round"/><path d="M290.7 316.6 L292.2 317.8 L295.2 315.3 L298.2 317.8" fill="none" stroke="#f14c4c" stroke-width="1.1" stroke-linejoin="round"/><path d="M344.5 316.6 L346.0 317.8 L349.0 315.3 L352.0 317.8" fill="none" stroke="#f14c4c" stroke-width="1.1" stroke-linejoin="round"/><path d="M221.6 335.6 L223.1 336.8 L226.1 334.3 L229.1 336.8" fill="none" stroke="#f14c4c" stroke-width="1.1" stroke-linejoin="round"/><path d="M329.1 335.6 L330.6 336.8 L333.6 334.3 L336.6 336.8" fill="none" stroke="#f14c4c" stroke-width="1.1" stroke-linejoin="round"/><path d="M413.6 335.6 L415.1 336.8 L418.1 334.3 L421.1 336.8" fill="none" stroke="#f14c4c" stroke-width="1.1" stroke-linejoin="round"/><path d="M221.6 354.6 L223.1 355.8 L226.1 353.3 L229.1 355.8" fill="none" stroke="#f14c4c" stroke-width="1.1" stroke-linejoin="round"/><path d="M306.1 354.6 L307.6 355.8 L310.6 353.3 L313.6 355.8" fill="none" stroke="#f14c4c" stroke-width="1.1" stroke-linejoin="round"/><path d="M405.9 354.6 L407.4 355.8 L410.4 353.3 L413.4 355.8" fill="none" stroke="#f14c4c" stroke-width="1.1" stroke-linejoin="round"/><path d="M190.9 373.6 L192.4 374.8 L195.4 372.3 L198.4 374.8" fill="none" stroke="#f14c4c" stroke-width="1.1" stroke-linejoin="round"/><path d="M229.3 373.6 L230.8 374.8 L233.8 372.3 L236.8 374.8" fill="none" stroke="#f14c4c" stroke-width="1.1" stroke-linejoin="round"/><path d="M252.3 373.6 L253.8 374.8 L256.8 372.3 L259.8 374.8 L262.8 372.3 L265.8 374.8 L268.8 372.3 L271.8 374.8 L274.8 372.3" fill="none" stroke="#f14c4c" stroke-width="1.1" stroke-linejoin="round"/><path d="M190.9 392.6 L192.4 393.8 L195.4 391.3 L198.4 393.8" fill="none" stroke="#f14c4c" stroke-width="1.1" stroke-linejoin="round"/><path d="M229.3 392.6 L230.8 393.8 L233.8 391.3 L236.8 393.8" fill="none" stroke="#f14c4c" stroke-width="1.1" stroke-linejoin="round"/><path d="M244.6 392.6 L246.1 393.8 L249.1 391.3 L252.1 393.8 L255.1 391.3 L258.1 393.8 L261.1 391.3 L264.1 393.8 L267.1 391.3" fill="none" stroke="#f14c4c" stroke-width="1.1" stroke-linejoin="round"/><path d="M221.6 411.6 L223.1 412.8 L226.1 410.3 L229.1 412.8" fill="none" stroke="#f14c4c" stroke-width="1.1" stroke-linejoin="round"/><path d="M321.4 411.6 L322.9 412.8 L325.9 410.3 L328.9 412.8" fill="none" stroke="#f14c4c" stroke-width="1.1" stroke-linejoin="round"/><path d="M390.6 411.6 L392.1 412.8 L395.1 410.3 L398.1 412.8" fill="none" stroke="#f14c4c" stroke-width="1.1" stroke-linejoin="round"/><path d="M221.6 430.6 L223.1 431.8 L226.1 429.3 L229.1 431.8" fill="none" stroke="#f14c4c" stroke-width="1.1" stroke-linejoin="round"/><path d="M336.8 430.6 L338.3 431.8 L341.3 429.3 L344.3 431.8" fill="none" stroke="#f14c4c" stroke-width="1.1" stroke-linejoin="round"/><path d="M405.9 430.6 L407.4 431.8 L410.4 429.3 L413.4 431.8" fill="none" stroke="#f14c4c" stroke-width="1.1" stroke-linejoin="round"/><path d="M221.6 449.6 L223.1 450.8 L226.1 448.3 L229.1 450.8" fill="none" stroke="#f14c4c" stroke-width="1.1" stroke-linejoin="round"/><path d="M290.7 449.6 L292.2 450.8 L295.2 448.3 L298.2 450.8" fill="none" stroke="#f14c4c" stroke-width="1.1" stroke-linejoin="round"/><path d="M344.5 449.6 L346.0 450.8 L349.0 448.3 L352.0 450.8" fill="none" stroke="#f14c4c" stroke-width="1.1" stroke-linejoin="round"/><path d="M221.6 468.6 L223.1 469.8 L226.1 467.3 L229.1 469.8" fill="none" stroke="#f14c4c" stroke-width="1.1" stroke-linejoin="round"/><path d="M329.1 468.6 L330.6 469.8 L333.6 467.3 L336.6 469.8" fill="none" stroke="#f14c4c" stroke-width="1.1" stroke-linejoin="round"/><path d="M413.6 468.6 L415.1 469.8 L418.1 467.3 L421.1 469.8" fill="none" stroke="#f14c4c" stroke-width="1.1" stroke-linejoin="round"/><path d="M221.6 487.6 L223.1 488.8 L226.1 486.3 L229.1 488.8" fill="none" stroke="#f14c4c" stroke-width="1.1" stroke-linejoin="round"/><path d="M306.1 487.6 L307.6 488.8 L310.6 486.3 L313.6 488.8" fill="none" stroke="#f14c4c" stroke-width="1.1" stroke-linejoin="round"/><path d="M405.9 487.6 L407.4 488.8 L410.4 486.3 L413.4 488.8" fill="none" stroke="#f14c4c" stroke-width="1.1" stroke-linejoin="round"/><path d="M190.9 506.6 L192.4 507.8 L195.4 505.3 L198.4 507.8" fill="none" stroke="#f14c4c" stroke-width="1.1" stroke-linejoin="round"/><path d="M229.3 506.6 L230.8 507.8 L233.8 505.3 L236.8 507.8" fill="none" stroke="#f14c4c" stroke-width="1.1" stroke-linejoin="round"/><path d="M260.0 506.6 L261.5 507.8 L264.5 505.3 L267.5 507.8" fill="none" stroke="#f14c4c" stroke-width="1.1" stroke-linejoin="round"/><path d="M160.2 525.6 L161.7 526.8 L164.7 524.3 L167.7 526.8" fill="none" stroke="#f14c4c" stroke-width="1.1" stroke-linejoin="round"/><path d="M129.4 544.6 L130.9 545.8 L133.9 543.3 L136.9 545.8" fill="none" stroke="#f14c4c" stroke-width="1.1" stroke-linejoin="round"/><path d="M137.1 544.6 L138.6 545.8 L141.6 543.3 L144.6 545.8" fill="none" stroke="#f14c4c" stroke-width="1.1" stroke-linejoin="round"/><path d="M298.4 601.6 L299.9 602.8 L302.9 600.3 L305.9 602.8" fill="none" stroke="#f14c4c" stroke-width="1.1" stroke-linejoin="round"/><path d="M167.8 639.6 L169.3 640.8 L172.3 638.3 L175.3 640.8" fill="none" stroke="#f14c4c" stroke-width="1.1" stroke-linejoin="round"/><path d="M260.0 658.6 L261.5 659.8 L264.5 657.3 L267.5 659.8" fill="none" stroke="#f14c4c" stroke-width="1.1" stroke-linejoin="round"/><path d="M167.8 696.6 L169.3 697.8 L172.3 695.3 L175.3 697.8" fill="none" stroke="#f14c4c" stroke-width="1.1" stroke-linejoin="round"/><path d="M321.4 715.6 L322.9 716.8 L325.9 714.3 L328.9 716.8" fill="none" stroke="#f14c4c" stroke-width="1.1" stroke-linejoin="round"/><path d="M190.9 867.6 L192.4 868.8 L195.4 866.3 L198.4 868.8" fill="none" stroke="#f14c4c" stroke-width="1.1" stroke-linejoin="round"/><path d="M475.0 867.6 L476.5 868.8 L479.5 866.3 L482.5 868.8" fill="none" stroke="#f14c4c" stroke-width="1.1" stroke-linejoin="round"/><path d="M167.8 905.6 L169.3 906.8 L172.3 904.3 L175.3 906.8" fill="none" stroke="#f14c4c" stroke-width="1.1" stroke-linejoin="round"/></svg>
<div class="abs" style="left:230.0px;top:375px;width:8px;height:19px;border:1px solid #888888;background:rgba(0,100,0,0.1)"></div>
<div class="abs" style="left:230.0px;top:489px;width:8px;height:19px;border:1px solid #888888;background:rgba(0,100,0,0.1)"></div>
<div class="abs" style="left:413.1px;top:413px;width:2px;height:19px;background:#aeafad"></div>
<div class="abs" style="left:68px;top:919px;width:1367px;height:12px;background:rgba(121,121,121,0.4)"></div>
<div class="abs" style="left:0;top:-6px;width:1482px;height:6px;box-shadow:0 0 6px #000000"></div>
<div class="abs" style="left:1478px;top:0;width:4px;height:931px;background:linear-gradient(90deg,rgba(0,0,0,0) 0%,rgba(0,0,0,0.35) 100%)"></div>
<svg style="left:0;top:0" width="1616" height="931"><rect x="1490" y="172" width="112" height="2" fill="#6f1c1c"/><rect x="1490" y="174" width="112" height="2" fill="#6f1c1c"/><rect x="1490" y="176" width="112" height="2" fill="#6f1c1c"/><rect x="1490" y="178" width="112" height="2" fill="#6f1c1c"/><rect x="1490" y="180" width="112" height="2" fill="#6f1c1c"/><rect x="1490" y="182" width="112" height="2" fill="#6f1c1c"/><rect x="1490" y="184" width="112" height="2" fill="#6f1c1c"/><rect x="1490" y="186" width="112" height="2" fill="#6f1c1c"/><rect x="1490" y="188" width="112" height="2" fill="#6f1c1c"/><rect x="1490" y="190" width="112" height="2" fill="#6f1c1c"/><rect x="1490" y="192" width="112" height="2" fill="#6f1c1c"/><rect x="1490" y="194" width="112" height="2" fill="#6f1c1c"/><rect x="1490" y="196" width="112" height="2" fill="#6f1c1c"/><rect x="1490" y="198" width="112" height="2" fill="#6f1c1c"/><rect x="1490" y="200" width="112" height="2" fill="#6f1c1c"/><rect x="1490" y="202" width="112" height="2" fill="#6f1c1c"/><rect x="1490" y="208" width="112" height="2" fill="#6f1c1c"/><rect x="1490" y="212" width="112" height="2" fill="#6f1c1c"/><rect x="1490" y="214" width="112" height="2" fill="#6f1c1c"/><rect x="1490" y="218" width="112" height="2" fill="#6f1c1c"/><rect x="1490" y="220" width="112" height="2" fill="#6f1c1c"/><rect x="1490" y="236" width="112" height="2" fill="#6f1c1c"/><rect x="1490" y="240" width="112" height="2" fill="#6f1c1c"/><rect x="1490" y="244" width="112" height="2" fill="#6f1c1c"/><rect x="1490" y="256" width="112" height="2" fill="#6f1c1c"/><rect x="1490" y="260" width="112" height="2" fill="#6f1c1c"/><rect x="1490" y="276" width="112" height="2" fill="#6f1c1c"/><rect x="1490" y="280" width="112" height="2" fill="#6f1c1c"/><rect x="1490" y="300" width="112" height="2" fill="#6f1c1c"/><rect x="1490" y="304" width="112" height="2" fill="#6f1c1c"/><rect x="1490" y="316" width="112" height="2" fill="#6f1c1c"/><rect x="1490" y="320" width="112" height="2" fill="#6f1c1c"/><rect x="1490" y="330" width="112" height="2" fill="#6f1c1c"/><rect x="1490" y="334" width="112" height="2" fill="#6f1c1c"/><rect x="1490" y="344" width="112" height="2" fill="#6f1c1c"/><rect x="1490" y="190" width="112" height="2" fill="#264f78"/><rect x="1490" y="0" width="7" height="2" fill="#9cdcfe" fill-opacity="0.38"/><rect x="1498" y="0" width="6" height="2" fill="#569cd6" fill-opacity="0.38"/><rect x="1490" y="2" width="3" height="2" fill="#808080" fill-opacity="0.38"/><rect x="1494" y="2" width="3" height="2" fill="#ce9178" fill-opacity="0.38"/><rect x="1498" y="2" width="2" height="2" fill="#808080" fill-opacity="0.38"/><rect x="1501" y="2" width="5" height="2" fill="#569cd6" fill-opacity="0.38"/><rect x="1507" y="2" width="3" height="2" fill="#ce9178" fill-opacity="0.38"/><rect x="1511" y="2" width="4" height="2" fill="#569cd6" fill-opacity="0.38"/><rect x="1490" y="6" width="5" height="2" fill="#569cd6" fill-opacity="0.38"/><rect x="1494" y="8" width="8" height="2" fill="#569cd6" fill-opacity="0.38"/><rect x="1503" y="8" width="3" height="2" fill="#9cdcfe" fill-opacity="0.38"/><rect x="1507" y="8" width="2" height="2" fill="#808080" fill-opacity="0.38"/><rect x="1510" y="8" width="5" height="2" fill="#569cd6" fill-opacity="0.38"/><rect x="1494" y="10" width="5" height="2" fill="#569cd6" fill-opacity="0.38"/><rect x="1500" y="10" width="4" height="2" fill="#ce9178" fill-opacity="0.38"/><rect x="1505" y="10" width="8" height="2" fill="#9cdcfe" fill-opacity="0.38"/><rect x="1514" y="10" width="3" height="2" fill="#808080" fill-opacity="0.38"/><rect x="1518" y="10" width="5" height="2" fill="#808080" fill-opacity="0.38"/><rect x="1494" y="14" width="4" height="2" fill="#569cd6" fill-opacity="0.38"/><rect x="1499" y="14" width="5" height="2" fill="#ce9178" fill-opacity="0.38"/><rect x="1505" y="14" width="3" height="2" fill="#808080" fill-opacity="0.38"/><rect x="1509" y="14" width="3" height="2" fill="#808080" fill-opacity="0.38"/><rect x="1513" y="14" width="2" height="2" fill="#808080" fill-opacity="0.38"/><rect x="1516" y="14" width="5" height="2" fill="#ce9178" fill-opacity="0.38"/><rect x="1522" y="14" width="8" height="2" fill="#ce9178" fill-opacity="0.38"/><rect x="1531" y="14" width="9" height="2" fill="#808080" fill-opacity="0.38"/><rect x="1541" y="14" width="6" height="2" fill="#ce9178" fill-opacity="0.38"/><rect x="1494" y="16" width="6" height="2" fill="#9cdcfe" fill-opacity="0.38"/><rect x="1501" y="16" width="4" height="2" fill="#9cdcfe" fill-opacity="0.38"/><rect x="1506" y="16" width="3" height="2" fill="#808080" fill-opacity="0.38"/><rect x="1510" y="16" width="6" height="2" fill="#808080" fill-opacity="0.38"/><rect x="1517" y="16" width="9" height="2" fill="#ce9178" fill-opacity="0.38"/><rect x="1527" y="16" width="9" height="2" fill="#ce9178" fill-opacity="0.38"/><rect x="1537" y="16" width="3" height="2" fill="#569cd6" fill-opacity="0.38"/><rect x="1541" y="16" width="8" height="2" fill="#9cdcfe" fill-opacity="0.38"/><rect x="1550" y="16" width="6" height="2" fill="#9cdcfe" fill-opacity="0.38"/><rect x="1494" y="18" width="9" height="2" fill="#ce9178" fill-opacity="0.38"/><rect x="1504" y="18" width="2" height="2" fill="#569cd6" fill-opacity="0.38"/><rect x="1507" y="18" width="7" height="2" fill="#ce9178" fill-opacity="0.38"/><rect x="1515" y="18" width="7" height="2" fill="#808080" fill-opacity="0.38"/><rect x="1523" y="18" width="9" height="2" fill="#808080" fill-opacity="0.38"/><rect x="1533" y="18" width="9" height="2" fill="#569cd6" fill-opacity="0.38"/><rect x="1543" y="18" width="3" height="2" fill="#ce9178" fill-opacity="0.38"/><rect x="1547" y="18" width="9" height="2" fill="#569cd6" fill-opacity="0.38"/><rect x="1557" y="18" width="2" height="2" fill="#ce9178" fill-opacity="0.38"/><rect x="1560" y="18" width="9" height="2" fill="#ce9178" fill-opacity="0.38"/><rect x="1570" y="18" width="8" height="2" fill="#ce9178" fill-opacity="0.38"/><rect x="1579" y="18" width="2" height="2" fill="#ce9178" fill-opacity="0.38"/><rect x="1582" y="18" width="7" height="2" fill="#9cdcfe" fill-opacity="0.38"/><rect x="1590" y="18" width="3" height="2" fill="#ce9178" fill-opacity="0.38"/><rect x="1594" y="18" width="2" height="2" fill="#9cdcfe" fill-opacity="0.38"/><rect x="1597" y="18" width="5" height="2" fill="#9cdcfe" fill-opacity="0.38"/><rect x="1490" y="20" width="5" height="2" fill="#ce9178" fill-opacity="0.38"/><rect x="1490" y="22" width="6" height="2" fill="#ce9178" fill-opacity="0.38"/><rect x="1494" y="24" width="3" height="2" fill="#9cdcfe" fill-opacity="0.38"/><rect x="1498" y="24" width="1" height="2" fill="#ce9178" fill-opacity="0.38"/><rect x="1498" y="26" width="6" height="2" fill="#9cdcfe" fill-opacity="0.38"/><rect x="1505" y="26" width="8" height="2" fill="#808080" fill-opacity="0.38"/><rect x="1514" y="26" width="1" height="2" fill="#ce9178" fill-opacity="0.38"/><rect x="1494" y="28" width="1" height="2" fill="#ce9178" fill-opacity="0.38"/><rect x="1494" y="30" width="5" height="2" fill="#9cdcfe" fill-opacity="0.38"/><rect x="1500" y="30" width="3" height="2" fill="#9cdcfe" fill-opacity="0.38"/><rect x="1498" y="32" width="4" height="2" fill="#9cdcfe" fill-opacity="0.38"/><rect x="1503" y="32" width="5" height="2" fill="#569cd6" fill-opacity="0.38"/><rect x="1509" y="32" width="2" height="2" fill="#808080" fill-opacity="0.38"/><rect x="1494" y="34" width="1" height="2" fill="#ce9178" fill-opacity="0.38"/><rect x="1490" y="36" width="6" height="2" fill="#569cd6" fill-opacity="0.38"/><rect x="1490" y="38" width="4" height="2" fill="#ce9178" fill-opacity="0.38"/><rect x="1494" y="40" width="7" height="2" fill="#808080" fill-opacity="0.38"/><rect x="1502" y="40" width="7" height="2" fill="#9cdcfe" fill-opacity="0.38"/><rect x="1510" y="40" width="2" height="2" fill="#ce9178" fill-opacity="0.38"/><rect x="1513" y="40" width="8" height="2" fill="#ce9178" fill-opacity="0.38"/><rect x="1522" y="40" width="8" height="2" fill="#ce9178" fill-opacity="0.38"/><rect x="1531" y="40" width="3" height="2" fill="#ce9178" fill-opacity="0.38"/><rect x="1535" y="40" width="8" height="2" fill="#569cd6" fill-opacity="0.38"/><rect x="1544" y="40" width="3" height="2" fill="#569cd6" fill-opacity="0.38"/><rect x="1498" y="42" width="5" height="2" fill="#ce9178" fill-opacity="0.38"/><rect x="1504" y="42" width="4" height="2" fill="#569cd6" fill-opacity="0.38"/><rect x="1509" y="42" width="7" height="2" fill="#808080" fill-opacity="0.38"/><rect x="1517" y="42" width="2" height="2" fill="#569cd6" fill-opacity="0.38"/><rect x="1520" y="42" width="2" height="2" fill="#808080" fill-opacity="0.38"/><rect x="1523" y="42" width="4" height="2" fill="#808080" fill-opacity="0.38"/><rect x="1528" y="42" width="3" height="2" fill="#ce9178" fill-opacity="0.38"/><rect x="1532" y="42" width="2" height="2" fill="#569cd6" fill-opacity="0.38"/><rect x="1535" y="42" width="5" height="2" fill="#808080" fill-opacity="0.38"/><rect x="1541" y="42" width="8" height="2" fill="#9cdcfe" fill-opacity="0.38"/><rect x="1550" y="42" width="6" height="2" fill="#ce9178" fill-opacity="0.38"/><rect x="1557" y="42" width="7" height="2" fill="#ce9178" fill-opacity="0.38"/><rect x="1565" y="42" width="3" height="2" fill="#569cd6" fill-opacity="0.38"/><rect x="1569" y="42" width="9" height="2" fill="#ce9178" fill-opacity="0.38"/><rect x="1579" y="42" width="4" height="2" fill="#ce9178" fill-opacity="0.38"/><rect x="1498" y="44" width="6" height="2" fill="#569cd6" fill-opacity="0.38"/><rect x="1505" y="44" width="4" height="2" fill="#569cd6" fill-opacity="0.38"/><rect x="1510" y="44" width="7" height="2" fill="#ce9178" fill-opacity="0.38"/><rect x="1518" y="44" width="9" height="2" fill="#9cdcfe" fill-opacity="0.38"/><rect x="1528" y="44" width="2" height="2" fill="#9cdcfe" fill-opacity="0.38"/><rect x="1531" y="44" width="7" height="2" fill="#9cdcfe" fill-opacity="0.38"/><rect x="1539" y="44" width="2" height="2" fill="#808080" fill-opacity="0.38"/><rect x="1542" y="44" width="6" height="2" fill="#569cd6" fill-opacity="0.38"/><rect x="1549" y="44" width="6" height="2" fill="#808080" fill-opacity="0.38"/><rect x="1556" y="44" width="7" height="2" fill="#9cdcfe" fill-opacity="0.38"/><rect x="1564" y="44" width="7" height="2" fill="#9cdcfe" fill-opacity="0.38"/><rect x="1572" y="44" width="7" height="2" fill="#9cdcfe" fill-opacity="0.38"/><rect x="1580" y="44" width="3" height="2" fill="#9cdcfe" fill-opacity="0.38"/><rect x="1498" y="46" width="8" height="2" fill="#9cdcfe" fill-opacity="0.38"/><rect x="1507" y="46" width="5" height="2" fill="#808080" fill-opacity="0.38"/><rect x="1513" y="46" width="5" height="2" fill="#ce9178" fill-opacity="0.38"/><rect x="1502" y="48" width="2" height="2" fill="#569cd6" fill-opacity="0.38"/><rect x="1505" y="48" width="6" height="2" fill="#ce9178" fill-opacity="0.38"/><rect x="1512" y="48" width="6" height="2" fill="#9cdcfe" fill-opacity="0.38"/><rect x="1519" y="48" width="7" height="2" fill="#ce9178" fill-opacity="0.38"/><rect x="1527" y="48" width="7" height="2" fill="#ce9178" fill-opacity="0.38"/><rect x="1535" y="48" width="3" height="2" fill="#9cdcfe" fill-opacity="0.38"/><rect x="1539" y="48" width="3" height="2" fill="#9cdcfe" fill-opacity="0.38"/><rect x="1543" y="48" width="9" height="2" fill="#9cdcfe" fill-opacity="0.38"/><rect x="1553" y="48" width="7" height="2" fill="#9cdcfe" fill-opacity="0.38"/><rect x="1561" y="48" width="9" height="2" fill="#808080" fill-opacity="0.38"/><rect x="1571" y="48" width="1" height="2" fill="#ce9178" fill-opacity="0.38"/><rect x="1506" y="50" width="7" height="2" fill="#569cd6" fill-opacity="0.38"/><rect x="1514" y="50" width="3" height="2" fill="#ce9178" fill-opacity="0.38"/><rect x="1518" y="50" width="5" height="2" fill="#ce9178" fill-opacity="0.38"/><rect x="1524" y="50" width="4" height="2" fill="#ce9178" fill-opacity="0.38"/><rect x="1529" y="50" width="7" height="2" fill="#569cd6" fill-opacity="0.38"/><rect x="1537" y="50" width="8" height="2" fill="#ce9178" fill-opacity="0.38"/><rect x="1546" y="50" width="8" height="2" fill="#569cd6" fill-opacity="0.38"/><rect x="1555" y="50" width="4" height="2" fill="#9cdcfe" fill-opacity="0.38"/><rect x="1560" y="50" width="4" height="2" fill="#569cd6" fill-opacity="0.38"/><rect x="1565" y="50" width="4" height="2" fill="#808080" fill-opacity="0.38"/><rect x="1570" y="50" width="9" height="2" fill="#9cdcfe" fill-opacity="0.38"/><rect x="1580" y="50" width="9" height="2" fill="#ce9178" fill-opacity="0.38"/><rect x="1590" y="50" width="4" height="2" fill="#808080" fill-opacity="0.38"/><rect x="1595" y="50" width="2" height="2" fill="#569cd6" fill-opacity="0.38"/><rect x="1510" y="52" width="2" height="2" fill="#569cd6" fill-opacity="0.38"/><rect x="1513" y="52" width="4" height="2" fill="#ce9178" fill-opacity="0.38"/><rect x="1518" y="52" width="5" height="2" fill="#9cdcfe" fill-opacity="0.38"/><rect x="1524" y="52" width="2" height="2" fill="#ce9178" fill-opacity="0.38"/><rect x="1527" y="52" width="4" height="2" fill="#ce9178" fill-opacity="0.38"/><rect x="1510" y="54" width="5" height="2" fill="#808080" fill-opacity="0.38"/><rect x="1516" y="54" width="7" height="2" fill="#ce9178" fill-opacity="0.38"/><rect x="1524" y="54" width="8" height="2" fill="#9cdcfe" fill-opacity="0.38"/><rect x="1533" y="54" width="2" height="2" fill="#ce9178" fill-opacity="0.38"/><rect x="1536" y="54" width="9" height="2" fill="#808080" fill-opacity="0.38"/><rect x="1546" y="54" width="8" height="2" fill="#808080" fill-opacity="0.38"/><rect x="1555" y="54" width="4" height="2" fill="#808080" fill-opacity="0.38"/><rect x="1560" y="54" width="2" height="2" fill="#808080" fill-opacity="0.38"/><rect x="1510" y="56" width="2" height="2" fill="#ce9178" fill-opacity="0.38"/><rect x="1513" y="56" width="4" height="2" fill="#808080" fill-opacity="0.38"/><rect x="1518" y="56" width="2" height="2" fill="#9cdcfe" fill-opacity="0.38"/><rect x="1521" y="56" width="4" height="2" fill="#9cdcfe" fill-opacity="0.38"/><rect x="1526" y="56" width="9" height="2" fill="#808080" fill-opacity="0.38"/><rect x="1536" y="56" width="3" height="2" fill="#808080" fill-opacity="0.38"/><rect x="1540" y="56" width="2" height="2" fill="#ce9178" fill-opacity="0.38"/><rect x="1543" y="56" width="2" height="2" fill="#569cd6" fill-opacity="0.38"/><rect x="1510" y="58" width="2" height="2" fill="#9cdcfe" fill-opacity="0.38"/><rect x="1513" y="58" width="5" height="2" fill="#ce9178" fill-opacity="0.38"/><rect x="1519" y="58" width="2" height="2" fill="#569cd6" fill-opacity="0.38"/><rect x="1522" y="58" width="9" height="2" fill="#808080" fill-opacity="0.38"/><rect x="1532" y="58" width="2" height="2" fill="#569cd6" fill-opacity="0.38"/><rect x="1535" y="58" width="2" height="2" fill="#ce9178" fill-opacity="0.38"/><rect x="1506" y="60" width="5" height="2" fill="#ce9178" fill-opacity="0.38"/><rect x="1506" y="62" width="9" height="2" fill="#808080" fill-opacity="0.38"/><rect x="1516" y="62" width="9" height="2" fill="#808080" fill-opacity="0.38"/><rect x="1526" y="62" width="5" height="2" fill="#808080" fill-opacity="0.38"/><rect x="1532" y="62" width="6" height="2" fill="#808080" fill-opacity="0.38"/><rect x="1539" y="62" width="5" height="2" fill="#ce9178" fill-opacity="0.38"/><rect x="1545" y="62" width="4" height="2" fill="#ce9178" fill-opacity="0.38"/><rect x="1510" y="64" width="3" height="2" fill="#ce9178" fill-opacity="0.38"/><rect x="1514" y="64" width="9" height="2" fill="#ce9178" fill-opacity="0.38"/><rect x="1524" y="64" width="3" height="2" fill="#9cdcfe" fill-opacity="0.38"/><rect x="1528" y="64" width="8" height="2" fill="#569cd6" fill-opacity="0.38"/><rect x="1537" y="64" width="2" height="2" fill="#ce9178" fill-opacity="0.38"/><rect x="1510" y="66" width="3" height="2" fill="#9cdcfe" fill-opacity="0.38"/><rect x="1514" y="66" width="7" height="2" fill="#9cdcfe" fill-opacity="0.38"/><rect x="1522" y="66" width="6" height="2" fill="#9cdcfe" fill-opacity="0.38"/><rect x="1529" y="66" width="9" height="2" fill="#9cdcfe" fill-opacity="0.38"/><rect x="1539" y="66" width="3" height="2" fill="#ce9178" fill-opacity="0.38"/><rect x="1543" y="66" width="9" height="2" fill="#9cdcfe" fill-opacity="0.38"/><rect x="1553" y="66" width="5" height="2" fill="#9cdcfe" fill-opacity="0.38"/><rect x="1559" y="66" width="3" height="2" fill="#808080" fill-opacity="0.38"/><rect x="1510" y="68" width="8" height="2" fill="#ce9178" fill-opacity="0.38"/><rect x="1519" y="68" width="8" height="2" fill="#9cdcfe" fill-opacity="0.38"/><rect x="1528" y="68" width="5" height="2" fill="#ce9178" fill-opacity="0.38"/><rect x="1510" y="70" width="3" height="2" fill="#ce9178" fill-opacity="0.38"/><rect x="1514" y="70" width="2" height="2" fill="#ce9178" fill-opacity="0.38"/><rect x="1517" y="70" width="9" height="2" fill="#ce9178" fill-opacity="0.38"/><rect x="1527" y="70" width="2" height="2" fill="#ce9178" fill-opacity="0.38"/><rect x="1530" y="70" width="7" height="2" fill="#808080" fill-opacity="0.38"/><rect x="1506" y="72" width="5" height="2" fill="#808080" fill-opacity="0.38"/><rect x="1502" y="74" width="3" height="2" fill="#569cd6" fill-opacity="0.38"/><rect x="1506" y="74" width="1" height="2" fill="#569cd6" fill-opacity="0.38"/><rect x="1502" y="76" width="3" height="2" fill="#ce9178" fill-opacity="0.38"/><rect x="1506" y="76" width="6" height="2" fill="#569cd6" fill-opacity="0.38"/><rect x="1513" y="76" width="4" height="2" fill="#ce9178" fill-opacity="0.38"/><rect x="1518" y="76" width="4" height="2" fill="#ce9178" fill-opacity="0.38"/><rect x="1523" y="76" width="6" height="2" fill="#ce9178" fill-opacity="0.38"/><rect x="1530" y="76" width="4" height="2" fill="#808080" fill-opacity="0.38"/><rect x="1535" y="76" width="9" height="2" fill="#ce9178" fill-opacity="0.38"/><rect x="1506" y="78" width="3" height="2" fill="#ce9178" fill-opacity="0.38"/><rect x="1510" y="78" width="2" height="2" fill="#9cdcfe" fill-opacity="0.38"/><rect x="1513" y="78" width="4" height="2" fill="#569cd6" fill-opacity="0.38"/><rect x="1502" y="80" width="5" height="2" fill="#569cd6" fill-opacity="0.38"/><rect x="1498" y="82" width="3" height="2" fill="#ce9178" fill-opacity="0.38"/><rect x="1502" y="82" width="1" height="2" fill="#808080" fill-opacity="0.38"/><rect x="1498" y="84" width="5" height="2" fill="#569cd6" fill-opacity="0.38"/><rect x="1504" y="84" width="6" height="2" fill="#569cd6" fill-opacity="0.38"/><rect x="1511" y="84" width="8" height="2" fill="#569cd6" fill-opacity="0.38"/><rect x="1502" y="86" width="7" height="2" fill="#808080" fill-opacity="0.38"/><rect x="1510" y="86" width="8" height="2" fill="#ce9178" fill-opacity="0.38"/><rect x="1519" y="86" width="4" height="2" fill="#569cd6" fill-opacity="0.38"/><rect x="1524" y="86" width="5" height="2" fill="#569cd6" fill-opacity="0.38"/><rect x="1530" y="86" width="4" height="2" fill="#ce9178" fill-opacity="0.38"/><rect x="1535" y="86" width="2" height="2" fill="#9cdcfe" fill-opacity="0.38"/><rect x="1538" y="86" width="5" height="2" fill="#ce9178" fill-opacity="0.38"/><rect x="1544" y="86" width="2" height="2" fill="#808080" fill-opacity="0.38"/><rect x="1506" y="88" width="5" height="2" fill="#ce9178" fill-opacity="0.38"/><rect x="1512" y="88" width="9" height="2" fill="#808080" fill-opacity="0.38"/><rect x="1522" y="88" width="4" height="2" fill="#ce9178" fill-opacity="0.38"/><rect x="1527" y="88" width="7" height="2" fill="#569cd6" fill-opacity="0.38"/><rect x="1506" y="90" width="6" height="2" fill="#569cd6" fill-opacity="0.38"/><rect x="1513" y="90" width="2" height="2" fill="#569cd6" fill-opacity="0.38"/><rect x="1516" y="90" width="5" height="2" fill="#808080" fill-opacity="0.38"/><rect x="1522" y="90" width="9" height="2" fill="#9cdcfe" fill-opacity="0.38"/><rect x="1532" y="90" width="9" height="2" fill="#569cd6" fill-opacity="0.38"/><rect x="1542" y="90" width="8" height="2" fill="#ce9178" fill-opacity="0.38"/><rect x="1551" y="90" width="8" height="2" fill="#808080" fill-opacity="0.38"/><rect x="1560" y="90" width="2" height="2" fill="#9cdcfe" fill-opacity="0.38"/><rect x="1506" y="92" width="5" height="2" fill="#ce9178" fill-opacity="0.38"/><rect x="1512" y="92" width="5" height="2" fill="#9cdcfe" fill-opacity="0.38"/><rect x="1518" y="92" width="8" height="2" fill="#ce9178" fill-opacity="0.38"/><rect x="1527" y="92" width="2" height="2" fill="#9cdcfe" fill-opacity="0.38"/><rect x="1530" y="92" width="1" height="2" fill="#569cd6" fill-opacity="0.38"/><rect x="1506" y="94" width="6" height="2" fill="#ce9178" fill-opacity="0.38"/><rect x="1513" y="94" width="4" height="2" fill="#569cd6" fill-opacity="0.38"/><rect x="1518" y="94" width="3" height="2" fill="#ce9178" fill-opacity="0.38"/><rect x="1522" y="94" width="6" height="2" fill="#808080" fill-opacity="0.38"/><rect x="1529" y="94" width="5" height="2" fill="#ce9178" fill-opacity="0.38"/><rect x="1502" y="96" width="2" height="2" fill="#ce9178" fill-opacity="0.38"/><rect x="1505" y="96" width="2" height="2" fill="#9cdcfe" fill-opacity="0.38"/><rect x="1498" y="98" width="5" height="2" fill="#ce9178" fill-opacity="0.38"/><rect x="1498" y="100" width="2" height="2" fill="#ce9178" fill-opacity="0.38"/><rect x="1501" y="100" width="7" height="2" fill="#ce9178" fill-opacity="0.38"/><rect x="1509" y="100" width="7" height="2" fill="#9cdcfe" fill-opacity="0.38"/><rect x="1517" y="100" width="2" height="2" fill="#ce9178" fill-opacity="0.38"/><rect x="1520" y="100" width="5" height="2" fill="#ce9178" fill-opacity="0.38"/><rect x="1526" y="100" width="4" height="2" fill="#569cd6" fill-opacity="0.38"/><rect x="1531" y="100" width="7" height="2" fill="#ce9178" fill-opacity="0.38"/><rect x="1539" y="100" width="3" height="2" fill="#ce9178" fill-opacity="0.38"/><rect x="1543" y="100" width="6" height="2" fill="#808080" fill-opacity="0.38"/><rect x="1550" y="100" width="5" height="2" fill="#9cdcfe" fill-opacity="0.38"/><rect x="1556" y="100" width="2" height="2" fill="#569cd6" fill-opacity="0.38"/><rect x="1559" y="100" width="6" height="2" fill="#569cd6" fill-opacity="0.38"/><rect x="1566" y="100" width="4" height="2" fill="#ce9178" fill-opacity="0.38"/><rect x="1498" y="102" width="2" height="2" fill="#ce9178" fill-opacity="0.38"/><rect x="1501" y="102" width="2" height="2" fill="#ce9178" fill-opacity="0.38"/><rect x="1504" y="102" width="6" height="2" fill="#9cdcfe" fill-opacity="0.38"/><rect x="1511" y="102" width="3" height="2" fill="#808080" fill-opacity="0.38"/><rect x="1515" y="102" width="4" height="2" fill="#808080" fill-opacity="0.38"/><rect x="1520" y="102" width="8" height="2" fill="#ce9178" fill-opacity="0.38"/><rect x="1529" y="102" width="9" height="2" fill="#9cdcfe" fill-opacity="0.38"/><rect x="1539" y="102" width="6" height="2" fill="#808080" fill-opacity="0.38"/><rect x="1546" y="102" width="4" height="2" fill="#569cd6" fill-opacity="0.38"/><rect x="1551" y="102" width="8" height="2" fill="#808080" fill-opacity="0.38"/><rect x="1560" y="102" width="3" height="2" fill="#808080" fill-opacity="0.38"/><rect x="1498" y="104" width="2" height="2" fill="#808080" fill-opacity="0.38"/><rect x="1501" y="104" width="5" height="2" fill="#569cd6" fill-opacity="0.38"/><rect x="1507" y="104" width="2" height="2" fill="#569cd6" fill-opacity="0.38"/><rect x="1510" y="104" width="4" height="2" fill="#ce9178" fill-opacity="0.38"/><rect x="1515" y="104" width="3" height="2" fill="#ce9178" fill-opacity="0.38"/><rect x="1502" y="106" width="7" height="2" fill="#808080" fill-opacity="0.38"/><rect x="1506" y="108" width="2" height="2" fill="#569cd6" fill-opacity="0.38"/><rect x="1509" y="108" width="5" height="2" fill="#ce9178" fill-opacity="0.38"/><rect x="1502" y="110" width="6" height="2" fill="#569cd6" fill-opacity="0.38"/><rect x="1509" y="110" width="1" height="2" fill="#569cd6" fill-opacity="0.38"/><rect x="1502" y="112" width="3" height="2" fill="#808080" fill-opacity="0.38"/><rect x="1506" y="112" width="3" height="2" fill="#ce9178" fill-opacity="0.38"/><rect x="1510" y="112" width="6" height="2" fill="#569cd6" fill-opacity="0.38"/><rect x="1517" y="112" width="6" height="2" fill="#9cdcfe" fill-opacity="0.38"/><rect x="1524" y="112" width="5" height="2" fill="#9cdcfe" fill-opacity="0.38"/><rect x="1530" y="112" width="9" height="2" fill="#ce9178" fill-opacity="0.38"/><rect x="1540" y="112" width="8" height="2" fill="#569cd6" fill-opacity="0.38"/><rect x="1549" y="112" width="1" height="2" fill="#ce9178" fill-opacity="0.38"/><rect x="1502" y="114" width="2" height="2" fill="#808080" fill-opacity="0.38"/><rect x="1505" y="114" width="5" height="2" fill="#569cd6" fill-opacity="0.38"/><rect x="1511" y="114" width="4" height="2" fill="#ce9178" fill-opacity="0.38"/><rect x="1516" y="114" width="6" height="2" fill="#ce9178" fill-opacity="0.38"/><rect x="1523" y="114" width="4" height="2" fill="#569cd6" fill-opacity="0.38"/><rect x="1528" y="114" width="9" height="2" fill="#569cd6" fill-opacity="0.38"/><rect x="1538" y="114" width="6" height="2" fill="#ce9178" fill-opacity="0.38"/><rect x="1498" y="116" width="3" height="2" fill="#9cdcfe" fill-opacity="0.38"/><rect x="1502" y="116" width="1" height="2" fill="#ce9178" fill-opacity="0.38"/><rect x="1498" y="118" width="6" height="2" fill="#ce9178" fill-opacity="0.38"/><rect x="1505" y="118" width="9" height="2" fill="#ce9178" fill-opacity="0.38"/><rect x="1515" y="118" width="3" height="2" fill="#808080" fill-opacity="0.38"/><rect x="1502" y="120" width="5" height="2" fill="#ce9178" fill-opacity="0.38"/><rect x="1508" y="120" width="1" height="2" fill="#ce9178" fill-opacity="0.38"/><rect x="1506" y="122" width="2" height="2" fill="#ce9178" fill-opacity="0.38"/><rect x="1509" y="122" width="4" height="2" fill="#569cd6" fill-opacity="0.38"/><rect x="1502" y="124" width="8" height="2" fill="#ce9178" fill-opacity="0.38"/><rect x="1502" y="126" width="8" height="2" fill="#9cdcfe" fill-opacity="0.38"/><rect x="1511" y="126" width="5" height="2" fill="#569cd6" fill-opacity="0.38"/><rect x="1517" y="126" width="3" height="2" fill="#9cdcfe" fill-opacity="0.38"/><rect x="1521" y="126" width="6" height="2" fill="#ce9178" fill-opacity="0.38"/><rect x="1528" y="126" width="4" height="2" fill="#808080" fill-opacity="0.38"/><rect x="1533" y="126" width="6" height="2" fill="#569cd6" fill-opacity="0.38"/><rect x="1540" y="126" width="7" height="2" fill="#9cdcfe" fill-opacity="0.38"/><rect x="1548" y="126" width="9" height="2" fill="#ce9178" fill-opacity="0.38"/><rect x="1558" y="126" width="8" height="2" fill="#569cd6" fill-opacity="0.38"/><rect x="1567" y="126" width="4" height="2" fill="#569cd6" fill-opacity="0.38"/><rect x="1572" y="126" width="9" height="2" fill="#ce9178" fill-opacity="0.38"/><rect x="1582" y="126" width="8" height="2" fill="#ce9178" fill-opacity="0.38"/><rect x="1591" y="126" width="4" height="2" fill="#ce9178" fill-opacity="0.38"/><rect x="1596" y="126" width="6" height="2" fill="#ce9178" fill-opacity="0.38"/><rect x="1502" y="128" width="7" height="2" fill="#569cd6" fill-opacity="0.38"/><rect x="1510" y="128" width="7" height="2" fill="#569cd6" fill-opacity="0.38"/><rect x="1518" y="128" width="7" height="2" fill="#ce9178" fill-opacity="0.38"/><rect x="1526" y="128" width="8" height="2" fill="#569cd6" fill-opacity="0.38"/><rect x="1535" y="128" width="5" height="2" fill="#569cd6" fill-opacity="0.38"/><rect x="1541" y="128" width="6" height="2" fill="#ce9178" fill-opacity="0.38"/><rect x="1548" y="128" width="7" height="2" fill="#569cd6" fill-opacity="0.38"/><rect x="1556" y="128" width="8" height="2" fill="#ce9178" fill-opacity="0.38"/><rect x="1565" y="128" width="3" height="2" fill="#ce9178" fill-opacity="0.38"/><rect x="1569" y="128" width="8" height="2" fill="#ce9178" fill-opacity="0.38"/><rect x="1578" y="128" width="2" height="2" fill="#ce9178" fill-opacity="0.38"/><rect x="1581" y="128" width="3" height="2" fill="#569cd6" fill-opacity="0.38"/><rect x="1585" y="128" width="6" height="2" fill="#9cdcfe" fill-opacity="0.38"/><rect x="1592" y="128" width="5" height="2" fill="#ce9178" fill-opacity="0.38"/><rect x="1598" y="128" width="4" height="2" fill="#808080" fill-opacity="0.38"/><rect x="1502" y="130" width="7" height="2" fill="#9cdcfe" fill-opacity="0.38"/><rect x="1510" y="130" width="7" height="2" fill="#ce9178" fill-opacity="0.38"/><rect x="1518" y="130" width="2" height="2" fill="#ce9178" fill-opacity="0.38"/><rect x="1521" y="130" width="5" height="2" fill="#569cd6" fill-opacity="0.38"/><rect x="1527" y="130" width="2" height="2" fill="#ce9178" fill-opacity="0.38"/><rect x="1530" y="130" width="9" height="2" fill="#808080" fill-opacity="0.38"/><rect x="1540" y="130" width="4" height="2" fill="#ce9178" fill-opacity="0.38"/><rect x="1545" y="130" width="9" height="2" fill="#569cd6" fill-opacity="0.38"/><rect x="1555" y="130" width="4" height="2" fill="#9cdcfe" fill-opacity="0.38"/><rect x="1560" y="130" width="9" height="2" fill="#ce9178" fill-opacity="0.38"/><rect x="1570" y="130" width="7" height="2" fill="#ce9178" fill-opacity="0.38"/><rect x="1578" y="130" width="6" height="2" fill="#ce9178" fill-opacity="0.38"/><rect x="1502" y="132" width="6" height="2" fill="#ce9178" fill-opacity="0.38"/><rect x="1509" y="132" width="5" height="2" fill="#ce9178" fill-opacity="0.38"/><rect x="1515" y="132" width="9" height="2" fill="#808080" fill-opacity="0.38"/><rect x="1525" y="132" width="8" height="2" fill="#569cd6" fill-opacity="0.38"/><rect x="1534" y="132" width="4" height="2" fill="#9cdcfe" fill-opacity="0.38"/><rect x="1539" y="132" width="3" height="2" fill="#9cdcfe" fill-opacity="0.38"/><rect x="1543" y="132" width="9" height="2" fill="#808080" fill-opacity="0.38"/><rect x="1553" y="132" width="5" height="2" fill="#ce9178" fill-opacity="0.38"/><rect x="1559" y="132" width="7" height="2" fill="#ce9178" fill-opacity="0.38"/><rect x="1567" y="132" width="8" height="2" fill="#9cdcfe" fill-opacity="0.38"/><rect x="1576" y="132" width="5" height="2" fill="#9cdcfe" fill-opacity="0.38"/><rect x="1582" y="132" width="3" height="2" fill="#9cdcfe" fill-opacity="0.38"/><rect x="1586" y="132" width="7" height="2" fill="#808080" fill-opacity="0.38"/><rect x="1594" y="132" width="3" height="2" fill="#ce9178" fill-opacity="0.38"/><rect x="1598" y="132" width="4" height="2" fill="#ce9178" fill-opacity="0.38"/><rect x="1502" y="134" width="6" height="2" fill="#808080" fill-opacity="0.38"/><rect x="1509" y="134" width="5" height="2" fill="#569cd6" fill-opacity="0.38"/><rect x="1515" y="134" width="8" height="2" fill="#ce9178" fill-opacity="0.38"/><rect x="1524" y="134" width="8" height="2" fill="#808080" fill-opacity="0.38"/><rect x="1533" y="134" width="5" height="2" fill="#ce9178" fill-opacity="0.38"/><rect x="1539" y="134" width="6" height="2" fill="#ce9178" fill-opacity="0.38"/><rect x="1546" y="134" width="2" height="2" fill="#ce9178" fill-opacity="0.38"/><rect x="1549" y="134" width="6" height="2" fill="#808080" fill-opacity="0.38"/><rect x="1556" y="134" width="7" height="2" fill="#9cdcfe" fill-opacity="0.38"/><rect x="1564" y="134" width="5" height="2" fill="#569cd6" fill-opacity="0.38"/><rect x="1570" y="134" width="6" height="2" fill="#9cdcfe" fill-opacity="0.38"/><rect x="1577" y="134" width="8" height="2" fill="#ce9178" fill-opacity="0.38"/><rect x="1586" y="134" width="9" height="2" fill="#ce9178" fill-opacity="0.38"/><rect x="1596" y="134" width="6" height="2" fill="#569cd6" fill-opacity="0.38"/><rect x="1502" y="136" width="4" height="2" fill="#569cd6" fill-opacity="0.38"/><rect x="1507" y="136" width="8" height="2" fill="#ce9178" fill-opacity="0.38"/><rect x="1516" y="136" width="9" height="2" fill="#569cd6" fill-opacity="0.38"/><rect x="1526" y="136" width="3" height="2" fill="#ce9178" fill-opacity="0.38"/><rect x="1530" y="136" width="9" height="2" fill="#ce9178" fill-opacity="0.38"/><rect x="1540" y="136" width="5" height="2" fill="#569cd6" fill-opacity="0.38"/><rect x="1546" y="136" width="5" height="2" fill="#9cdcfe" fill-opacity="0.38"/><rect x="1552" y="136" width="4" height="2" fill="#808080" fill-opacity="0.38"/><rect x="1557" y="136" width="3" height="2" fill="#ce9178" fill-opacity="0.38"/><rect x="1561" y="136" width="3" height="2" fill="#808080" fill-opacity="0.38"/><rect x="1565" y="136" width="2" height="2" fill="#569cd6" fill-opacity="0.38"/><rect x="1568" y="136" width="4" height="2" fill="#9cdcfe" fill-opacity="0.38"/><rect x="1573" y="136" width="1" height="2" fill="#ce9178" fill-opacity="0.38"/><rect x="1502" y="138" width="4" height="2" fill="#ce9178" fill-opacity="0.38"/><rect x="1507" y="138" width="8" height="2" fill="#569cd6" fill-opacity="0.38"/><rect x="1516" y="138" width="3" height="2" fill="#569cd6" fill-opacity="0.38"/><rect x="1520" y="138" width="6" height="2" fill="#808080" fill-opacity="0.38"/><rect x="1527" y="138" width="5" height="2" fill="#ce9178" fill-opacity="0.38"/><rect x="1533" y="138" width="6" height="2" fill="#9cdcfe" fill-opacity="0.38"/><rect x="1540" y="138" width="2" height="2" fill="#569cd6" fill-opacity="0.38"/><rect x="1543" y="138" width="6" height="2" fill="#ce9178" fill-opacity="0.38"/><rect x="1550" y="138" width="6" height="2" fill="#ce9178" fill-opacity="0.38"/><rect x="1557" y="138" width="5" height="2" fill="#ce9178" fill-opacity="0.38"/><rect x="1563" y="138" width="5" height="2" fill="#808080" fill-opacity="0.38"/><rect x="1569" y="138" width="5" height="2" fill="#569cd6" fill-opacity="0.38"/><rect x="1575" y="138" width="8" height="2" fill="#ce9178" fill-opacity="0.38"/><rect x="1584" y="138" width="2" height="2" fill="#569cd6" fill-opacity="0.38"/><rect x="1587" y="138" width="5" height="2" fill="#ce9178" fill-opacity="0.38"/><rect x="1593" y="138" width="6" height="2" fill="#569cd6" fill-opacity="0.38"/><rect x="1502" y="140" width="6" height="2" fill="#9cdcfe" fill-opacity="0.38"/><rect x="1509" y="140" width="8" height="2" fill="#ce9178" fill-opacity="0.38"/><rect x="1518" y="140" width="5" height="2" fill="#ce9178" fill-opacity="0.38"/><rect x="1524" y="140" width="2" height="2" fill="#ce9178" fill-opacity="0.38"/><rect x="1527" y="140" width="8" height="2" fill="#ce9178" fill-opacity="0.38"/><rect x="1536" y="140" width="8" height="2" fill="#9cdcfe" fill-opacity="0.38"/><rect x="1545" y="140" width="2" height="2" fill="#ce9178" fill-opacity="0.38"/><rect x="1548" y="140" width="3" height="2" fill="#9cdcfe" fill-opacity="0.38"/><rect x="1552" y="140" width="9" height="2" fill="#9cdcfe" fill-opacity="0.38"/><rect x="1562" y="140" width="6" height="2" fill="#9cdcfe" fill-opacity="0.38"/><rect x="1569" y="140" width="5" height="2" fill="#ce9178" fill-opacity="0.38"/><rect x="1575" y="140" width="5" height="2" fill="#ce9178" fill-opacity="0.38"/><rect x="1581" y="140" width="2" height="2" fill="#569cd6" fill-opacity="0.38"/><rect x="1502" y="142" width="9" height="2" fill="#808080" fill-opacity="0.38"/><rect x="1512" y="142" width="4" height="2" fill="#9cdcfe" fill-opacity="0.38"/><rect x="1517" y="142" width="9" height="2" fill="#ce9178" fill-opacity="0.38"/><rect x="1527" y="142" width="2" height="2" fill="#808080" fill-opacity="0.38"/><rect x="1530" y="142" width="4" height="2" fill="#ce9178" fill-opacity="0.38"/><rect x="1535" y="142" width="2" height="2" fill="#9cdcfe" fill-opacity="0.38"/><rect x="1538" y="142" width="2" height="2" fill="#808080" fill-opacity="0.38"/><rect x="1541" y="142" width="4" height="2" fill="#ce9178" fill-opacity="0.38"/><rect x="1546" y="142" width="2" height="2" fill="#569cd6" fill-opacity="0.38"/><rect x="1549" y="142" width="4" height="2" fill="#ce9178" fill-opacity="0.38"/><rect x="1554" y="142" width="9" height="2" fill="#ce9178" fill-opacity="0.38"/><rect x="1564" y="142" width="3" height="2" fill="#569cd6" fill-opacity="0.38"/><rect x="1568" y="142" width="4" height="2" fill="#ce9178" fill-opacity="0.38"/><rect x="1573" y="142" width="5" height="2" fill="#9cdcfe" fill-opacity="0.38"/><rect x="1579" y="142" width="9" height="2" fill="#569cd6" fill-opacity="0.38"/><rect x="1589" y="142" width="6" height="2" fill="#ce9178" fill-opacity="0.38"/><rect x="1596" y="142" width="6" height="2" fill="#ce9178" fill-opacity="0.38"/><rect x="1502" y="144" width="9" height="2" fill="#9cdcfe" fill-opacity="0.38"/><rect x="1512" y="144" width="3" height="2" fill="#569cd6" fill-opacity="0.38"/><rect x="1516" y="144" width="3" height="2" fill="#ce9178" fill-opacity="0.38"/><rect x="1520" y="144" width="3" height="2" fill="#ce9178" fill-opacity="0.38"/><rect x="1524" y="144" width="8" height="2" fill="#569cd6" fill-opacity="0.38"/><rect x="1533" y="144" width="5" height="2" fill="#ce9178" fill-opacity="0.38"/><rect x="1539" y="144" width="7" height="2" fill="#ce9178" fill-opacity="0.38"/><rect x="1547" y="144" width="8" height="2" fill="#569cd6" fill-opacity="0.38"/><rect x="1556" y="144" width="2" height="2" fill="#ce9178" fill-opacity="0.38"/><rect x="1559" y="144" width="5" height="2" fill="#ce9178" fill-opacity="0.38"/><rect x="1565" y="144" width="9" height="2" fill="#9cdcfe" fill-opacity="0.38"/><rect x="1575" y="144" width="7" height="2" fill="#ce9178" fill-opacity="0.38"/><rect x="1583" y="144" width="9" height="2" fill="#569cd6" fill-opacity="0.38"/><rect x="1593" y="144" width="6" height="2" fill="#9cdcfe" fill-opacity="0.38"/><rect x="1498" y="146" width="2" height="2" fill="#808080" fill-opacity="0.38"/><rect x="1500" y="146" width="3" height="2" fill="#569cd6" fill-opacity="0.38"/><rect x="1503" y="146" width="1" height="2" fill="#808080" fill-opacity="0.38"/><rect x="1494" y="148" width="2" height="2" fill="#808080" fill-opacity="0.38"/><rect x="1496" y="148" width="3" height="2" fill="#569cd6" fill-opacity="0.38"/><rect x="1499" y="148" width="1" height="2" fill="#808080" fill-opacity="0.38"/><rect x="1490" y="150" width="2" height="2" fill="#808080" fill-opacity="0.38"/><rect x="1492" y="150" width="4" height="2" fill="#569cd6" fill-opacity="0.38"/><rect x="1496" y="150" width="1" height="2" fill="#808080" fill-opacity="0.38"/><rect x="1490" y="154" width="1" height="2" fill="#808080" fill-opacity="0.38"/><rect x="1491" y="154" width="6" height="2" fill="#569cd6" fill-opacity="0.38"/><rect x="1497" y="154" width="1" height="2" fill="#808080" fill-opacity="0.38"/><rect x="1494" y="156" width="3" height="2" fill="#569cd6" fill-opacity="0.38"/><rect x="1498" y="156" width="3" height="2" fill="#9cdcfe" fill-opacity="0.38"/><rect x="1502" y="156" width="1" height="2" fill="#d4d4d4" fill-opacity="0.38"/><rect x="1504" y="156" width="3" height="2" fill="#569cd6" fill-opacity="0.38"/><rect x="1508" y="156" width="3" height="2" fill="#dcdcaa" fill-opacity="0.38"/><rect x="1511" y="156" width="1" height="2" fill="#ffd700" fill-opacity="0.38"/><rect x="1512" y="156" width="1" height="2" fill="#da70d6" fill-opacity="0.38"/><rect x="1498" y="158" width="2" height="2" fill="#9cdcfe" fill-opacity="0.38"/><rect x="1500" y="158" width="1" height="2" fill="#d4d4d4" fill-opacity="0.38"/><rect x="1502" y="158" width="6" height="2" fill="#ce9178" fill-opacity="0.38"/><rect x="1508" y="158" width="1" height="2" fill="#d4d4d4" fill-opacity="0.38"/><rect x="1498" y="160" width="4" height="2" fill="#9cdcfe" fill-opacity="0.38"/><rect x="1502" y="160" width="1" height="2" fill="#d4d4d4" fill-opacity="0.38"/><rect x="1504" y="160" width="1" height="2" fill="#179fff" fill-opacity="0.38"/><rect x="1502" y="162" width="6" height="2" fill="#9cdcfe" fill-opacity="0.38"/><rect x="1508" y="162" width="1" height="2" fill="#d4d4d4" fill-opacity="0.38"/><rect x="1510" y="162" width="5" height="2" fill="#569cd6" fill-opacity="0.38"/><rect x="1515" y="162" width="1" height="2" fill="#d4d4d4" fill-opacity="0.38"/><rect x="1502" y="164" width="10" height="2" fill="#9cdcfe" fill-opacity="0.38"/><rect x="1512" y="164" width="1" height="2" fill="#d4d4d4" fill-opacity="0.38"/><rect x="1514" y="164" width="16" height="2" fill="#ce9178" fill-opacity="0.38"/><rect x="1530" y="164" width="1" height="2" fill="#d4d4d4" fill-opacity="0.38"/><rect x="1502" y="166" width="8" height="2" fill="#9cdcfe" fill-opacity="0.38"/><rect x="1510" y="166" width="1" height="2" fill="#d4d4d4" fill-opacity="0.38"/><rect x="1512" y="166" width="5" height="2" fill="#569cd6" fill-opacity="0.38"/><rect x="1517" y="166" width="1" height="2" fill="#d4d4d4" fill-opacity="0.38"/><rect x="1502" y="168" width="6" height="2" fill="#9cdcfe" fill-opacity="0.38"/><rect x="1508" y="168" width="1" height="2" fill="#d4d4d4" fill-opacity="0.38"/><rect x="1510" y="168" width="2" height="2" fill="#ce9178" fill-opacity="0.38"/><rect x="1512" y="168" width="1" height="2" fill="#d4d4d4" fill-opacity="0.38"/><rect x="1502" y="170" width="7" height="2" fill="#9cdcfe" fill-opacity="0.38"/><rect x="1509" y="170" width="1" height="2" fill="#d4d4d4" fill-opacity="0.38"/><rect x="1511" y="170" width="1" height="2" fill="#ffd700" fill-opacity="0.38"/><rect x="1506" y="172" width="1" height="2" fill="#ff2a2a"/><rect x="1506" y="172" width="1" height="2" fill="#e07070" fill-opacity="0.38"/><rect x="1507" y="172" width="3" height="2" fill="#e07070" fill-opacity="0.38"/><rect x="1511" y="172" width="1" height="2" fill="#e07070" fill-opacity="0.38"/><rect x="1513" y="172" width="3" height="2" fill="#ff2a2a"/><rect x="1513" y="172" width="3" height="2" fill="#e07070" fill-opacity="0.38"/><rect x="1510" y="174" width="1" height="2" fill="#ff2a2a"/><rect x="1510" y="174" width="1" height="2" fill="#e07070" fill-opacity="0.38"/><rect x="1511" y="174" width="3" height="2" fill="#e07070" fill-opacity="0.38"/><rect x="1515" y="174" width="8" height="2" fill="#e07070" fill-opacity="0.38"/><rect x="1523" y="174" width="1" height="2" fill="#ff2a2a"/><rect x="1523" y="174" width="1" height="2" fill="#e07070" fill-opacity="0.38"/><rect x="1525" y="174" width="3" height="2" fill="#e07070" fill-opacity="0.38"/><rect x="1528" y="174" width="1" height="2" fill="#e07070" fill-opacity="0.38"/><rect x="1530" y="174" width="2" height="2" fill="#e07070" fill-opacity="0.38"/><rect x="1532" y="174" width="1" height="2" fill="#ff2a2a"/><rect x="1532" y="174" width="1" height="2" fill="#e07070" fill-opacity="0.38"/><rect x="1510" y="176" width="1" height="2" fill="#ff2a2a"/><rect x="1510" y="176" width="1" height="2" fill="#e07070" fill-opacity="0.38"/><rect x="1511" y="176" width="3" height="2" fill="#e07070" fill-opacity="0.38"/><rect x="1515" y="176" width="10" height="2" fill="#e07070" fill-opacity="0.38"/><rect x="1525" y="176" width="1" height="2" fill="#ff2a2a"/><rect x="1525" y="176" width="1" height="2" fill="#e07070" fill-opacity="0.38"/><rect x="1527" y="176" width="3" height="2" fill="#e07070" fill-opacity="0.38"/><rect x="1530" y="176" width="1" height="2" fill="#e07070" fill-opacity="0.38"/><rect x="1532" y="176" width="2" height="2" fill="#e07070" fill-opacity="0.38"/><rect x="1534" y="176" width="1" height="2" fill="#ff2a2a"/><rect x="1534" y="176" width="1" height="2" fill="#e07070" fill-opacity="0.38"/><rect x="1510" y="178" width="1" height="2" fill="#ff2a2a"/><rect x="1510" y="178" width="1" height="2" fill="#e07070" fill-opacity="0.38"/><rect x="1511" y="178" width="3" height="2" fill="#e07070" fill-opacity="0.38"/><rect x="1515" y="178" width="4" height="2" fill="#e07070" fill-opacity="0.38"/><rect x="1519" y="178" width="1" height="2" fill="#ff2a2a"/><rect x="1519" y="178" width="1" height="2" fill="#e07070" fill-opacity="0.38"/><rect x="1521" y="178" width="1" height="2" fill="#e07070" fill-opacity="0.38"/><rect x="1522" y="178" width="1" height="2" fill="#e07070" fill-opacity="0.38"/><rect x="1524" y="178" width="2" height="2" fill="#e07070" fill-opacity="0.38"/><rect x="1526" y="178" width="1" height="2" fill="#ff2a2a"/><rect x="1526" y="178" width="1" height="2" fill="#e07070" fill-opacity="0.38"/><rect x="1510" y="180" width="1" height="2" fill="#ff2a2a"/><rect x="1510" y="180" width="1" height="2" fill="#e07070" fill-opacity="0.38"/><rect x="1511" y="180" width="3" height="2" fill="#e07070" fill-opacity="0.38"/><rect x="1515" y="180" width="9" height="2" fill="#e07070" fill-opacity="0.38"/><rect x="1524" y="180" width="1" height="2" fill="#ff2a2a"/><rect x="1524" y="180" width="1" height="2" fill="#e07070" fill-opacity="0.38"/><rect x="1526" y="180" width="5" height="2" fill="#e07070" fill-opacity="0.38"/><rect x="1531" y="180" width="1" height="2" fill="#e07070" fill-opacity="0.38"/><rect x="1533" y="180" width="2" height="2" fill="#e07070" fill-opacity="0.38"/><rect x="1535" y="180" width="1" height="2" fill="#ff2a2a"/><rect x="1535" y="180" width="1" height="2" fill="#e07070" fill-opacity="0.38"/><rect x="1510" y="182" width="1" height="2" fill="#ff2a2a"/><rect x="1510" y="182" width="1" height="2" fill="#e07070" fill-opacity="0.38"/><rect x="1511" y="182" width="3" height="2" fill="#e07070" fill-opacity="0.38"/><rect x="1515" y="182" width="6" height="2" fill="#e07070" fill-opacity="0.38"/><rect x="1521" y="182" width="1" height="2" fill="#ff2a2a"/><rect x="1521" y="182" width="1" height="2" fill="#e07070" fill-opacity="0.38"/><rect x="1523" y="182" width="7" height="2" fill="#e07070" fill-opacity="0.38"/><rect x="1530" y="182" width="1" height="2" fill="#e07070" fill-opacity="0.38"/><rect x="1532" y="182" width="2" height="2" fill="#e07070" fill-opacity="0.38"/><rect x="1534" y="182" width="1" height="2" fill="#ff2a2a"/><rect x="1534" y="182" width="1" height="2" fill="#e07070" fill-opacity="0.38"/><rect x="1506" y="184" width="1" height="2" fill="#ff2a2a"/><rect x="1506" y="184" width="1" height="2" fill="#e07070" fill-opacity="0.38"/><rect x="1507" y="184" width="3" height="2" fill="#e07070" fill-opacity="0.38"/><rect x="1511" y="184" width="1" height="2" fill="#ff2a2a"/><rect x="1511" y="184" width="1" height="2" fill="#e07070" fill-opacity="0.38"/><rect x="1512" y="184" width="1" height="2" fill="#e07070" fill-opacity="0.38"/><rect x="1514" y="184" width="3" height="2" fill="#ff2a2a"/><rect x="1514" y="184" width="3" height="2" fill="#e07070" fill-opacity="0.38"/><rect x="1506" y="186" width="1" height="2" fill="#ff2a2a"/><rect x="1506" y="186" width="1" height="2" fill="#e07070" fill-opacity="0.38"/><rect x="1507" y="186" width="3" height="2" fill="#e07070" fill-opacity="0.38"/><rect x="1511" y="186" width="1" height="2" fill="#ff2a2a"/><rect x="1511" y="186" width="1" height="2" fill="#e07070" fill-opacity="0.38"/><rect x="1513" y="186" width="3" height="2" fill="#ff2a2a"/><rect x="1513" y="186" width="3" height="2" fill="#e07070" fill-opacity="0.38"/><rect x="1510" y="188" width="1" height="2" fill="#ff2a2a"/><rect x="1510" y="188" width="1" height="2" fill="#e07070" fill-opacity="0.38"/><rect x="1511" y="188" width="3" height="2" fill="#e07070" fill-opacity="0.38"/><rect x="1515" y="188" width="8" height="2" fill="#e07070" fill-opacity="0.38"/><rect x="1523" y="188" width="1" height="2" fill="#ff2a2a"/><rect x="1523" y="188" width="1" height="2" fill="#e07070" fill-opacity="0.38"/><rect x="1525" y="188" width="3" height="2" fill="#e07070" fill-opacity="0.38"/><rect x="1528" y="188" width="1" height="2" fill="#e07070" fill-opacity="0.38"/><rect x="1530" y="188" width="2" height="2" fill="#e07070" fill-opacity="0.38"/><rect x="1532" y="188" width="1" height="2" fill="#ff2a2a"/><rect x="1532" y="188" width="1" height="2" fill="#e07070" fill-opacity="0.38"/><rect x="1510" y="190" width="1" height="2" fill="#ff2a2a"/><rect x="1510" y="190" width="1" height="2" fill="#e07070" fill-opacity="0.38"/><rect x="1511" y="190" width="3" height="2" fill="#e07070" fill-opacity="0.38"/><rect x="1515" y="190" width="10" height="2" fill="#e07070" fill-opacity="0.38"/><rect x="1525" y="190" width="1" height="2" fill="#ff2a2a"/><rect x="1525" y="190" width="1" height="2" fill="#e07070" fill-opacity="0.38"/><rect x="1527" y="190" width="3" height="2" fill="#e07070" fill-opacity="0.38"/><rect x="1530" y="190" width="1" height="2" fill="#e07070" fill-opacity="0.38"/><rect x="1532" y="190" width="2" height="2" fill="#e07070" fill-opacity="0.38"/><rect x="1534" y="190" width="1" height="2" fill="#ff2a2a"/><rect x="1534" y="190" width="1" height="2" fill="#e07070" fill-opacity="0.38"/><rect x="1510" y="192" width="1" height="2" fill="#ff2a2a"/><rect x="1510" y="192" width="1" height="2" fill="#e07070" fill-opacity="0.38"/><rect x="1511" y="192" width="3" height="2" fill="#e07070" fill-opacity="0.38"/><rect x="1515" y="192" width="4" height="2" fill="#e07070" fill-opacity="0.38"/><rect x="1519" y="192" width="1" height="2" fill="#ff2a2a"/><rect x="1519" y="192" width="1" height="2" fill="#e07070" fill-opacity="0.38"/><rect x="1521" y="192" width="1" height="2" fill="#e07070" fill-opacity="0.38"/><rect x="1522" y="192" width="1" height="2" fill="#e07070" fill-opacity="0.38"/><rect x="1524" y="192" width="2" height="2" fill="#e07070" fill-opacity="0.38"/><rect x="1526" y="192" width="1" height="2" fill="#ff2a2a"/><rect x="1526" y="192" width="1" height="2" fill="#e07070" fill-opacity="0.38"/><rect x="1510" y="194" width="1" height="2" fill="#ff2a2a"/><rect x="1510" y="194" width="1" height="2" fill="#e07070" fill-opacity="0.38"/><rect x="1511" y="194" width="3" height="2" fill="#e07070" fill-opacity="0.38"/><rect x="1515" y="194" width="9" height="2" fill="#e07070" fill-opacity="0.38"/><rect x="1524" y="194" width="1" height="2" fill="#ff2a2a"/><rect x="1524" y="194" width="1" height="2" fill="#e07070" fill-opacity="0.38"/><rect x="1526" y="194" width="5" height="2" fill="#e07070" fill-opacity="0.38"/><rect x="1531" y="194" width="1" height="2" fill="#e07070" fill-opacity="0.38"/><rect x="1533" y="194" width="2" height="2" fill="#e07070" fill-opacity="0.38"/><rect x="1535" y="194" width="1" height="2" fill="#ff2a2a"/><rect x="1535" y="194" width="1" height="2" fill="#e07070" fill-opacity="0.38"/><rect x="1510" y="196" width="1" height="2" fill="#ff2a2a"/><rect x="1510" y="196" width="1" height="2" fill="#e07070" fill-opacity="0.38"/><rect x="1511" y="196" width="3" height="2" fill="#e07070" fill-opacity="0.38"/><rect x="1515" y="196" width="6" height="2" fill="#e07070" fill-opacity="0.38"/><rect x="1521" y="196" width="1" height="2" fill="#ff2a2a"/><rect x="1521" y="196" width="1" height="2" fill="#e07070" fill-opacity="0.38"/><rect x="1523" y="196" width="7" height="2" fill="#e07070" fill-opacity="0.38"/><rect x="1530" y="196" width="1" height="2" fill="#e07070" fill-opacity="0.38"/><rect x="1532" y="196" width="2" height="2" fill="#e07070" fill-opacity="0.38"/><rect x="1534" y="196" width="1" height="2" fill="#ff2a2a"/><rect x="1534" y="196" width="1" height="2" fill="#e07070" fill-opacity="0.38"/><rect x="1506" y="198" width="1" height="2" fill="#ff2a2a"/><rect x="1506" y="198" width="1" height="2" fill="#e07070" fill-opacity="0.38"/><rect x="1507" y="198" width="3" height="2" fill="#e07070" fill-opacity="0.38"/><rect x="1511" y="198" width="1" height="2" fill="#ff2a2a"/><rect x="1511" y="198" width="1" height="2" fill="#e07070" fill-opacity="0.38"/><rect x="1513" y="198" width="2" height="2" fill="#e07070" fill-opacity="0.38"/><rect x="1515" y="198" width="1" height="2" fill="#ff2a2a"/><rect x="1515" y="198" width="1" height="2" fill="#e07070" fill-opacity="0.38"/><rect x="1502" y="200" width="1" height="2" fill="#ff2a2a"/><rect x="1502" y="200" width="1" height="2" fill="#ffd700" fill-opacity="0.38"/><rect x="1498" y="202" width="1" height="2" fill="#ff2a2a"/><rect x="1498" y="202" width="1" height="2" fill="#179fff" fill-opacity="0.38"/><rect x="1499" y="202" width="1" height="2" fill="#ff2a2a"/><rect x="1499" y="202" width="1" height="2" fill="#d4d4d4" fill-opacity="0.38"/><rect x="1498" y="206" width="7" height="2" fill="#9cdcfe" fill-opacity="0.38"/><rect x="1505" y="206" width="1" height="2" fill="#d4d4d4" fill-opacity="0.38"/><rect x="1507" y="206" width="1" height="2" fill="#179fff" fill-opacity="0.38"/><rect x="1502" y="208" width="9" height="2" fill="#dcdcaa" fill-opacity="0.38"/><rect x="1511" y="208" width="1" height="2" fill="#ffd700" fill-opacity="0.38"/><rect x="1512" y="208" width="6" height="2" fill="#9cdcfe" fill-opacity="0.38"/><rect x="1518" y="208" width="1" height="2" fill="#ffd700" fill-opacity="0.38"/><rect x="1520" y="208" width="1" height="2" fill="#ff2a2a"/><rect x="1520" y="208" width="1" height="2" fill="#ffd700" fill-opacity="0.38"/><rect x="1506" y="210" width="4" height="2" fill="#569cd6" fill-opacity="0.38"/><rect x="1510" y="210" width="1" height="2" fill="#d4d4d4" fill-opacity="0.38"/><rect x="1511" y="210" width="7" height="2" fill="#9cdcfe" fill-opacity="0.38"/><rect x="1518" y="210" width="1" height="2" fill="#d4d4d4" fill-opacity="0.38"/><rect x="1519" y="210" width="7" height="2" fill="#dcdcaa" fill-opacity="0.38"/><rect x="1526" y="210" width="1" height="2" fill="#da70d6" fill-opacity="0.38"/><rect x="1527" y="210" width="6" height="2" fill="#9cdcfe" fill-opacity="0.38"/><rect x="1533" y="210" width="1" height="2" fill="#da70d6" fill-opacity="0.38"/><rect x="1534" y="210" width="1" height="2" fill="#d4d4d4" fill-opacity="0.38"/><rect x="1502" y="212" width="1" height="2" fill="#ffd700" fill-opacity="0.38"/><rect x="1503" y="212" width="1" height="2" fill="#ff2a2a"/><rect x="1503" y="212" width="1" height="2" fill="#d4d4d4" fill-opacity="0.38"/><rect x="1502" y="214" width="3" height="2" fill="#9cdcfe" fill-opacity="0.38"/><rect x="1505" y="214" width="1" height="2" fill="#d4d4d4" fill-opacity="0.38"/><rect x="1507" y="214" width="8" height="2" fill="#569cd6" fill-opacity="0.38"/><rect x="1515" y="214" width="1" height="2" fill="#ff2a2a"/><rect x="1515" y="214" width="1" height="2" fill="#ffd700" fill-opacity="0.38"/><rect x="1516" y="214" width="3" height="2" fill="#9cdcfe" fill-opacity="0.38"/><rect x="1519" y="214" width="1" height="2" fill="#ffd700" fill-opacity="0.38"/><rect x="1521" y="214" width="1" height="2" fill="#ffd700" fill-opacity="0.38"/><rect x="1506" y="216" width="4" height="2" fill="#569cd6" fill-opacity="0.38"/><rect x="1510" y="216" width="1" height="2" fill="#d4d4d4" fill-opacity="0.38"/><rect x="1511" y="216" width="6" height="2" fill="#9cdcfe" fill-opacity="0.38"/><rect x="1518" y="216" width="1" height="2" fill="#d4d4d4" fill-opacity="0.38"/><rect x="1520" y="216" width="3" height="2" fill="#9cdcfe" fill-opacity="0.38"/><rect x="1523" y="216" width="1" height="2" fill="#d4d4d4" fill-opacity="0.38"/><rect x="1502" y="218" width="1" height="2" fill="#ffd700" fill-opacity="0.38"/><rect x="1503" y="218" width="1" height="2" fill="#ff2a2a"/><rect x="1503" y="218" width="1" height="2" fill="#d4d4d4" fill-opacity="0.38"/><rect x="1502" y="220" width="12" height="2" fill="#dcdcaa" fill-opacity="0.38"/><rect x="1514" y="220" width="1" height="2" fill="#ffd700" fill-opacity="0.38"/><rect x="1515" y="220" width="6" height="2" fill="#9cdcfe" fill-opacity="0.38"/><rect x="1521" y="220" width="1" height="2" fill="#ffd700" fill-opacity="0.38"/><rect x="1523" y="220" width="1" height="2" fill="#ff2a2a"/><rect x="1523" y="220" width="1" height="2" fill="#ffd700" fill-opacity="0.38"/><rect x="1506" y="222" width="2" height="2" fill="#c586c0" fill-opacity="0.38"/><rect x="1509" y="222" width="1" height="2" fill="#da70d6" fill-opacity="0.38"/><rect x="1510" y="222" width="6" height="2" fill="#9cdcfe" fill-opacity="0.38"/><rect x="1516" y="222" width="1" height="2" fill="#d4d4d4" fill-opacity="0.38"/><rect x="1517" y="222" width="7" height="2" fill="#9cdcfe" fill-opacity="0.38"/><rect x="1524" y="222" width="1" height="2" fill="#da70d6" fill-opacity="0.38"/><rect x="1526" y="222" width="6" height="2" fill="#c586c0" fill-opacity="0.38"/><rect x="1532" y="222" width="1" height="2" fill="#d4d4d4" fill-opacity="0.38"/><rect x="1506" y="224" width="2" height="2" fill="#c586c0" fill-opacity="0.38"/><rect x="1509" y="224" width="1" height="2" fill="#da70d6" fill-opacity="0.38"/><rect x="1510" y="224" width="4" height="2" fill="#569cd6" fill-opacity="0.38"/><rect x="1514" y="224" width="1" height="2" fill="#d4d4d4" fill-opacity="0.38"/><rect x="1515" y="224" width="8" height="2" fill="#9cdcfe" fill-opacity="0.38"/><rect x="1523" y="224" width="1" height="2" fill="#da70d6" fill-opacity="0.38"/><rect x="1525" y="224" width="6" height="2" fill="#c586c0" fill-opacity="0.38"/><rect x="1531" y="224" width="1" height="2" fill="#d4d4d4" fill-opacity="0.38"/><rect x="1506" y="228" width="4" height="2" fill="#569cd6" fill-opacity="0.38"/><rect x="1510" y="228" width="1" height="2" fill="#d4d4d4" fill-opacity="0.38"/><rect x="1511" y="228" width="8" height="2" fill="#9cdcfe" fill-opacity="0.38"/><rect x="1520" y="228" width="1" height="2" fill="#d4d4d4" fill-opacity="0.38"/><rect x="1522" y="228" width="6" height="2" fill="#9cdcfe" fill-opacity="0.38"/><rect x="1528" y="228" width="1" height="2" fill="#d4d4d4" fill-opacity="0.38"/><rect x="1506" y="232" width="4" height="2" fill="#569cd6" fill-opacity="0.38"/><rect x="1510" y="232" width="1" height="2" fill="#d4d4d4" fill-opacity="0.38"/><rect x="1511" y="232" width="8" height="2" fill="#9cdcfe" fill-opacity="0.38"/><rect x="1519" y="232" width="1" height="2" fill="#d4d4d4" fill-opacity="0.38"/><rect x="1520" y="232" width="7" height="2" fill="#9cdcfe" fill-opacity="0.38"/><rect x="1528" y="232" width="1" height="2" fill="#d4d4d4" fill-opacity="0.38"/><rect x="1530" y="232" width="4" height="2" fill="#569cd6" fill-opacity="0.38"/><rect x="1534" y="232" width="1" height="2" fill="#d4d4d4" fill-opacity="0.38"/><rect x="1506" y="234" width="4" height="2" fill="#569cd6" fill-opacity="0.38"/><rect x="1510" y="234" width="1" height="2" fill="#d4d4d4" fill-opacity="0.38"/><rect x="1511" y="234" width="8" height="2" fill="#9cdcfe" fill-opacity="0.38"/><rect x="1519" y="234" width="1" height="2" fill="#d4d4d4" fill-opacity="0.38"/><rect x="1520" y="234" width="9" height="2" fill="#9cdcfe" fill-opacity="0.38"/><rect x="1530" y="234" width="1" height="2" fill="#d4d4d4" fill-opacity="0.38"/><rect x="1532" y="234" width="4" height="2" fill="#569cd6" fill-opacity="0.38"/><rect x="1536" y="234" width="1" height="2" fill="#d4d4d4" fill-opacity="0.38"/><rect x="1537" y="234" width="10" height="2" fill="#9cdcfe" fill-opacity="0.38"/><rect x="1547" y="234" width="1" height="2" fill="#d4d4d4" fill-opacity="0.38"/><rect x="1506" y="236" width="1" height="2" fill="#ff2a2a"/><rect x="1506" y="236" width="1" height="2" fill="#d4d4d4" fill-opacity="0.38"/><rect x="1507" y="236" width="3" height="2" fill="#d4d4d4" fill-opacity="0.38"/><rect x="1511" y="236" width="4" height="2" fill="#569cd6" fill-opacity="0.38"/><rect x="1515" y="236" width="1" height="2" fill="#d4d4d4" fill-opacity="0.38"/><rect x="1516" y="236" width="5" height="2" fill="#9cdcfe" fill-opacity="0.38"/><rect x="1521" y="236" width="1" height="2" fill="#d4d4d4" fill-opacity="0.38"/><rect x="1522" y="236" width="9" height="2" fill="#9cdcfe" fill-opacity="0.38"/><rect x="1531" y="236" width="1" height="2" fill="#d4d4d4" fill-opacity="0.38"/><rect x="1532" y="236" width="5" height="2" fill="#dcdcaa" fill-opacity="0.38"/><rect x="1537" y="236" width="2" height="2" fill="#da70d6" fill-opacity="0.38"/><rect x="1539" y="236" width="1" height="2" fill="#d4d4d4" fill-opacity="0.38"/><rect x="1541" y="236" width="2" height="2" fill="#d4d4d4" fill-opacity="0.38"/><rect x="1543" y="236" width="1" height="2" fill="#ff2a2a"/><rect x="1543" y="236" width="1" height="2" fill="#d4d4d4" fill-opacity="0.38"/><rect x="1506" y="238" width="2" height="2" fill="#9cdcfe" fill-opacity="0.38"/><rect x="1508" y="238" width="1" height="2" fill="#d4d4d4" fill-opacity="0.38"/><rect x="1509" y="238" width="7" height="2" fill="#dcdcaa" fill-opacity="0.38"/><rect x="1516" y="238" width="1" height="2" fill="#da70d6" fill-opacity="0.38"/><rect x="1517" y="238" width="12" height="2" fill="#ce9178" fill-opacity="0.38"/><rect x="1529" y="238" width="1" height="2" fill="#d4d4d4" fill-opacity="0.38"/><rect x="1531" y="238" width="6" height="2" fill="#9cdcfe" fill-opacity="0.38"/><rect x="1537" y="238" width="1" height="2" fill="#d4d4d4" fill-opacity="0.38"/><rect x="1538" y="238" width="2" height="2" fill="#9cdcfe" fill-opacity="0.38"/><rect x="1540" y="238" width="1" height="2" fill="#d4d4d4" fill-opacity="0.38"/><rect x="1542" y="238" width="5" height="2" fill="#569cd6" fill-opacity="0.38"/><rect x="1547" y="238" width="1" height="2" fill="#da70d6" fill-opacity="0.38"/><rect x="1548" y="238" width="1" height="2" fill="#d4d4d4" fill-opacity="0.38"/><rect x="1502" y="240" width="1" height="2" fill="#ffd700" fill-opacity="0.38"/><rect x="1503" y="240" width="1" height="2" fill="#ff2a2a"/><rect x="1503" y="240" width="1" height="2" fill="#d4d4d4" fill-opacity="0.38"/><rect x="1502" y="244" width="8" height="2" fill="#569cd6" fill-opacity="0.38"/><rect x="1511" y="244" width="8" height="2" fill="#569cd6" fill-opacity="0.38"/><rect x="1520" y="244" width="1" height="2" fill="#569cd6" fill-opacity="0.38"/><rect x="1506" y="246" width="2" height="2" fill="#9cdcfe" fill-opacity="0.38"/><rect x="1509" y="246" width="5" height="2" fill="#ce9178" fill-opacity="0.38"/><rect x="1515" y="246" width="3" height="2" fill="#d4d4d4" fill-opacity="0.38"/><rect x="1519" y="246" width="7" height="2" fill="#9cdcfe" fill-opacity="0.38"/><rect x="1527" y="246" width="6" height="2" fill="#9cdcfe" fill-opacity="0.38"/><rect x="1534" y="246" width="2" height="2" fill="#9cdcfe" fill-opacity="0.38"/><rect x="1537" y="246" width="7" height="2" fill="#9cdcfe" fill-opacity="0.38"/><rect x="1545" y="246" width="6" height="2" fill="#569cd6" fill-opacity="0.38"/><rect x="1552" y="246" width="3" height="2" fill="#569cd6" fill-opacity="0.38"/><rect x="1556" y="246" width="1" height="2" fill="#569cd6" fill-opacity="0.38"/><rect x="1506" y="248" width="9" height="2" fill="#ce9178" fill-opacity="0.38"/><rect x="1516" y="248" width="9" height="2" fill="#dcdcaa" fill-opacity="0.38"/><rect x="1526" y="248" width="2" height="2" fill="#dcdcaa" fill-opacity="0.38"/><rect x="1506" y="252" width="9" height="2" fill="#9cdcfe" fill-opacity="0.38"/><rect x="1516" y="252" width="9" height="2" fill="#9cdcfe" fill-opacity="0.38"/><rect x="1526" y="252" width="2" height="2" fill="#ce9178" fill-opacity="0.38"/><rect x="1506" y="254" width="6" height="2" fill="#ce9178" fill-opacity="0.38"/><rect x="1513" y="254" width="4" height="2" fill="#d4d4d4" fill-opacity="0.38"/><rect x="1518" y="254" width="5" height="2" fill="#9cdcfe" fill-opacity="0.38"/><rect x="1524" y="254" width="6" height="2" fill="#dcdcaa" fill-opacity="0.38"/><rect x="1502" y="256" width="2" height="2" fill="#d4d4d4" fill-opacity="0.38"/><rect x="1502" y="260" width="3" height="2" fill="#d4d4d4" fill-opacity="0.38"/><rect x="1506" y="260" width="5" height="2" fill="#dcdcaa" fill-opacity="0.38"/><rect x="1512" y="260" width="4" height="2" fill="#9cdcfe" fill-opacity="0.38"/><rect x="1517" y="260" width="4" height="2" fill="#569cd6" fill-opacity="0.38"/><rect x="1506" y="262" width="2" height="2" fill="#dcdcaa" fill-opacity="0.38"/><rect x="1509" y="262" width="7" height="2" fill="#9cdcfe" fill-opacity="0.38"/><rect x="1517" y="262" width="8" height="2" fill="#569cd6" fill-opacity="0.38"/><rect x="1526" y="262" width="3" height="2" fill="#9cdcfe" fill-opacity="0.38"/><rect x="1506" y="266" width="3" height="2" fill="#9cdcfe" fill-opacity="0.38"/><rect x="1510" y="266" width="3" height="2" fill="#dcdcaa" fill-opacity="0.38"/><rect x="1514" y="266" width="9" height="2" fill="#ce9178" fill-opacity="0.38"/><rect x="1524" y="266" width="9" height="2" fill="#9cdcfe" fill-opacity="0.38"/><rect x="1506" y="268" width="5" height="2" fill="#9cdcfe" fill-opacity="0.38"/><rect x="1512" y="268" width="8" height="2" fill="#dcdcaa" fill-opacity="0.38"/><rect x="1521" y="268" width="5" height="2" fill="#ce9178" fill-opacity="0.38"/><rect x="1527" y="268" width="3" height="2" fill="#9cdcfe" fill-opacity="0.38"/><rect x="1531" y="268" width="2" height="2" fill="#9cdcfe" fill-opacity="0.38"/><rect x="1506" y="270" width="6" height="2" fill="#9cdcfe" fill-opacity="0.38"/><rect x="1513" y="270" width="6" height="2" fill="#ce9178" fill-opacity="0.38"/><rect x="1520" y="270" width="6" height="2" fill="#9cdcfe" fill-opacity="0.38"/><rect x="1506" y="272" width="9" height="2" fill="#9cdcfe" fill-opacity="0.38"/><rect x="1516" y="272" width="4" height="2" fill="#9cdcfe" fill-opacity="0.38"/><rect x="1521" y="272" width="3" height="2" fill="#9cdcfe" fill-opacity="0.38"/><rect x="1506" y="274" width="6" height="2" fill="#d4d4d4" fill-opacity="0.38"/><rect x="1513" y="274" width="5" height="2" fill="#9cdcfe" fill-opacity="0.38"/><rect x="1519" y="274" width="3" height="2" fill="#dcdcaa" fill-opacity="0.38"/><rect x="1523" y="274" width="6" height="2" fill="#9cdcfe" fill-opacity="0.38"/><rect x="1530" y="274" width="5" height="2" fill="#ce9178" fill-opacity="0.38"/><rect x="1536" y="274" width="3" height="2" fill="#ce9178" fill-opacity="0.38"/><rect x="1540" y="274" width="7" height="2" fill="#569cd6" fill-opacity="0.38"/><rect x="1502" y="276" width="2" height="2" fill="#569cd6" fill-opacity="0.38"/><rect x="1502" y="280" width="9" height="2" fill="#9cdcfe" fill-opacity="0.38"/><rect x="1512" y="280" width="8" height="2" fill="#9cdcfe" fill-opacity="0.38"/><rect x="1506" y="282" width="2" height="2" fill="#9cdcfe" fill-opacity="0.38"/><rect x="1509" y="282" width="5" height="2" fill="#569cd6" fill-opacity="0.38"/><rect x="1515" y="282" width="2" height="2" fill="#9cdcfe" fill-opacity="0.38"/><rect x="1518" y="282" width="5" height="2" fill="#569cd6" fill-opacity="0.38"/><rect x="1524" y="282" width="7" height="2" fill="#d4d4d4" fill-opacity="0.38"/><rect x="1506" y="286" width="4" height="2" fill="#dcdcaa" fill-opacity="0.38"/><rect x="1511" y="286" width="6" height="2" fill="#ce9178" fill-opacity="0.38"/><rect x="1518" y="286" width="2" height="2" fill="#569cd6" fill-opacity="0.38"/><rect x="1521" y="286" width="5" height="2" fill="#9cdcfe" fill-opacity="0.38"/><rect x="1506" y="288" width="2" height="2" fill="#6a9955" fill-opacity="0.38"/><rect x="1509" y="288" width="7" height="2" fill="#6a9955" fill-opacity="0.38"/><rect x="1517" y="288" width="2" height="2" fill="#6a9955" fill-opacity="0.38"/><rect x="1520" y="288" width="6" height="2" fill="#6a9955" fill-opacity="0.38"/><rect x="1527" y="288" width="5" height="2" fill="#6a9955" fill-opacity="0.38"/><rect x="1533" y="288" width="7" height="2" fill="#6a9955" fill-opacity="0.38"/><rect x="1541" y="288" width="7" height="2" fill="#6a9955" fill-opacity="0.38"/><rect x="1549" y="288" width="6" height="2" fill="#6a9955" fill-opacity="0.38"/><rect x="1556" y="288" width="5" height="2" fill="#6a9955" fill-opacity="0.38"/><rect x="1562" y="288" width="9" height="2" fill="#6a9955" fill-opacity="0.38"/><rect x="1572" y="288" width="2" height="2" fill="#6a9955" fill-opacity="0.38"/><rect x="1506" y="292" width="3" height="2" fill="#dcdcaa" fill-opacity="0.38"/><rect x="1510" y="292" width="4" height="2" fill="#ce9178" fill-opacity="0.38"/><rect x="1515" y="292" width="3" height="2" fill="#ce9178" fill-opacity="0.38"/><rect x="1519" y="292" width="4" height="2" fill="#dcdcaa" fill-opacity="0.38"/><rect x="1524" y="292" width="6" height="2" fill="#dcdcaa" fill-opacity="0.38"/><rect x="1531" y="292" width="6" height="2" fill="#ce9178" fill-opacity="0.38"/><rect x="1538" y="292" width="6" height="2" fill="#dcdcaa" fill-opacity="0.38"/><rect x="1545" y="292" width="2" height="2" fill="#9cdcfe" fill-opacity="0.38"/><rect x="1548" y="292" width="6" height="2" fill="#dcdcaa" fill-opacity="0.38"/><rect x="1506" y="296" width="8" height="2" fill="#6a9955" fill-opacity="0.38"/><rect x="1515" y="296" width="7" height="2" fill="#6a9955" fill-opacity="0.38"/><rect x="1523" y="296" width="8" height="2" fill="#6a9955" fill-opacity="0.38"/><rect x="1532" y="296" width="5" height="2" fill="#6a9955" fill-opacity="0.38"/><rect x="1538" y="296" width="8" height="2" fill="#6a9955" fill-opacity="0.38"/><rect x="1506" y="298" width="8" height="2" fill="#569cd6" fill-opacity="0.38"/><rect x="1515" y="298" width="3" height="2" fill="#dcdcaa" fill-opacity="0.38"/><rect x="1519" y="298" width="5" height="2" fill="#dcdcaa" fill-opacity="0.38"/><rect x="1502" y="300" width="2" height="2" fill="#9cdcfe" fill-opacity="0.38"/><rect x="1502" y="304" width="2" height="2" fill="#569cd6" fill-opacity="0.38"/><rect x="1505" y="304" width="4" height="2" fill="#ce9178" fill-opacity="0.38"/><rect x="1510" y="304" width="8" height="2" fill="#569cd6" fill-opacity="0.38"/><rect x="1519" y="304" width="1" height="2" fill="#ce9178" fill-opacity="0.38"/><rect x="1506" y="306" width="4" height="2" fill="#9cdcfe" fill-opacity="0.38"/><rect x="1511" y="306" width="7" height="2" fill="#9cdcfe" fill-opacity="0.38"/><rect x="1519" y="306" width="4" height="2" fill="#d4d4d4" fill-opacity="0.38"/><rect x="1524" y="306" width="4" height="2" fill="#569cd6" fill-opacity="0.38"/><rect x="1529" y="306" width="3" height="2" fill="#dcdcaa" fill-opacity="0.38"/><rect x="1533" y="306" width="9" height="2" fill="#9cdcfe" fill-opacity="0.38"/><rect x="1543" y="306" width="6" height="2" fill="#9cdcfe" fill-opacity="0.38"/><rect x="1550" y="306" width="2" height="2" fill="#dcdcaa" fill-opacity="0.38"/><rect x="1553" y="306" width="1" height="2" fill="#569cd6" fill-opacity="0.38"/><rect x="1506" y="308" width="8" height="2" fill="#569cd6" fill-opacity="0.38"/><rect x="1515" y="308" width="4" height="2" fill="#ce9178" fill-opacity="0.38"/><rect x="1520" y="308" width="5" height="2" fill="#d4d4d4" fill-opacity="0.38"/><rect x="1526" y="308" width="8" height="2" fill="#d4d4d4" fill-opacity="0.38"/><rect x="1535" y="308" width="1" height="2" fill="#dcdcaa" fill-opacity="0.38"/><rect x="1506" y="312" width="4" height="2" fill="#d4d4d4" fill-opacity="0.38"/><rect x="1511" y="312" width="5" height="2" fill="#569cd6" fill-opacity="0.38"/><rect x="1517" y="312" width="8" height="2" fill="#d4d4d4" fill-opacity="0.38"/><rect x="1526" y="312" width="3" height="2" fill="#dcdcaa" fill-opacity="0.38"/><rect x="1506" y="314" width="7" height="2" fill="#569cd6" fill-opacity="0.38"/><rect x="1514" y="314" width="4" height="2" fill="#9cdcfe" fill-opacity="0.38"/><rect x="1519" y="314" width="5" height="2" fill="#569cd6" fill-opacity="0.38"/><rect x="1525" y="314" width="2" height="2" fill="#ce9178" fill-opacity="0.38"/><rect x="1502" y="316" width="2" height="2" fill="#569cd6" fill-opacity="0.38"/><rect x="1502" y="320" width="8" height="2" fill="#d4d4d4" fill-opacity="0.38"/><rect x="1511" y="320" width="8" height="2" fill="#d4d4d4" fill-opacity="0.38"/><rect x="1506" y="322" width="6" height="2" fill="#ce9178" fill-opacity="0.38"/><rect x="1513" y="322" width="8" height="2" fill="#9cdcfe" fill-opacity="0.38"/><rect x="1522" y="322" width="5" height="2" fill="#dcdcaa" fill-opacity="0.38"/><rect x="1528" y="322" width="8" height="2" fill="#ce9178" fill-opacity="0.38"/><rect x="1537" y="322" width="7" height="2" fill="#dcdcaa" fill-opacity="0.38"/><rect x="1545" y="322" width="9" height="2" fill="#9cdcfe" fill-opacity="0.38"/><rect x="1555" y="322" width="2" height="2" fill="#569cd6" fill-opacity="0.38"/><rect x="1558" y="322" width="9" height="2" fill="#dcdcaa" fill-opacity="0.38"/><rect x="1506" y="324" width="5" height="2" fill="#dcdcaa" fill-opacity="0.38"/><rect x="1512" y="324" width="9" height="2" fill="#9cdcfe" fill-opacity="0.38"/><rect x="1522" y="324" width="9" height="2" fill="#dcdcaa" fill-opacity="0.38"/><rect x="1532" y="324" width="3" height="2" fill="#569cd6" fill-opacity="0.38"/><rect x="1506" y="328" width="4" height="2" fill="#9cdcfe" fill-opacity="0.38"/><rect x="1511" y="328" width="8" height="2" fill="#9cdcfe" fill-opacity="0.38"/><rect x="1520" y="328" width="3" height="2" fill="#dcdcaa" fill-opacity="0.38"/><rect x="1524" y="328" width="2" height="2" fill="#569cd6" fill-opacity="0.38"/><rect x="1527" y="328" width="4" height="2" fill="#569cd6" fill-opacity="0.38"/><rect x="1532" y="328" width="7" height="2" fill="#ce9178" fill-opacity="0.38"/><rect x="1540" y="328" width="3" height="2" fill="#569cd6" fill-opacity="0.38"/><rect x="1544" y="328" width="1" height="2" fill="#ce9178" fill-opacity="0.38"/><rect x="1502" y="330" width="2" height="2" fill="#569cd6" fill-opacity="0.38"/><rect x="1502" y="334" width="3" height="2" fill="#d4d4d4" fill-opacity="0.38"/><rect x="1506" y="334" width="3" height="2" fill="#9cdcfe" fill-opacity="0.38"/><rect x="1510" y="334" width="4" height="2" fill="#dcdcaa" fill-opacity="0.38"/><rect x="1506" y="336" width="6" height="2" fill="#9cdcfe" fill-opacity="0.38"/><rect x="1513" y="336" width="5" height="2" fill="#569cd6" fill-opacity="0.38"/><rect x="1519" y="336" width="6" height="2" fill="#d4d4d4" fill-opacity="0.38"/><rect x="1506" y="338" width="6" height="2" fill="#9cdcfe" fill-opacity="0.38"/><rect x="1513" y="338" width="7" height="2" fill="#d4d4d4" fill-opacity="0.38"/><rect x="1521" y="338" width="6" height="2" fill="#dcdcaa" fill-opacity="0.38"/><rect x="1528" y="338" width="3" height="2" fill="#9cdcfe" fill-opacity="0.38"/><rect x="1502" y="340" width="1" height="2" fill="#9cdcfe" fill-opacity="0.38"/><rect x="1498" y="342" width="1" height="2" fill="#d4d4d4" fill-opacity="0.38"/><rect x="1494" y="344" width="4" height="2" fill="#9cdcfe" fill-opacity="0.38"/><rect x="1494" y="348" width="7" height="2" fill="#569cd6" fill-opacity="0.38"/><rect x="1502" y="348" width="5" height="2" fill="#9cdcfe" fill-opacity="0.38"/><rect x="1508" y="348" width="8" height="2" fill="#9cdcfe" fill-opacity="0.38"/><rect x="1517" y="348" width="6" height="2" fill="#ce9178" fill-opacity="0.38"/><rect x="1524" y="348" width="7" height="2" fill="#dcdcaa" fill-opacity="0.38"/><rect x="1532" y="348" width="4" height="2" fill="#9cdcfe" fill-opacity="0.38"/><rect x="1537" y="348" width="3" height="2" fill="#d4d4d4" fill-opacity="0.38"/><rect x="1541" y="348" width="2" height="2" fill="#ce9178" fill-opacity="0.38"/><rect x="1544" y="348" width="7" height="2" fill="#dcdcaa" fill-opacity="0.38"/><rect x="1552" y="348" width="3" height="2" fill="#9cdcfe" fill-opacity="0.38"/><rect x="1556" y="348" width="8" height="2" fill="#ce9178" fill-opacity="0.38"/><rect x="1565" y="348" width="3" height="2" fill="#9cdcfe" fill-opacity="0.38"/><rect x="1498" y="350" width="8" height="2" fill="#9cdcfe" fill-opacity="0.38"/><rect x="1507" y="350" width="4" height="2" fill="#9cdcfe" fill-opacity="0.38"/><rect x="1512" y="350" width="4" height="2" fill="#569cd6" fill-opacity="0.38"/><rect x="1502" y="352" width="5" height="2" fill="#9cdcfe" fill-opacity="0.38"/><rect x="1502" y="354" width="4" height="2" fill="#d4d4d4" fill-opacity="0.38"/><rect x="1507" y="354" width="2" height="2" fill="#9cdcfe" fill-opacity="0.38"/><rect x="1510" y="354" width="6" height="2" fill="#9cdcfe" fill-opacity="0.38"/><rect x="1517" y="354" width="3" height="2" fill="#ce9178" fill-opacity="0.38"/><rect x="1502" y="356" width="2" height="2" fill="#ce9178" fill-opacity="0.38"/><rect x="1505" y="356" width="2" height="2" fill="#9cdcfe" fill-opacity="0.38"/><rect x="1508" y="356" width="4" height="2" fill="#9cdcfe" fill-opacity="0.38"/><rect x="1513" y="356" width="8" height="2" fill="#dcdcaa" fill-opacity="0.38"/><rect x="1502" y="358" width="7" height="2" fill="#569cd6" fill-opacity="0.38"/><rect x="1510" y="358" width="4" height="2" fill="#dcdcaa" fill-opacity="0.38"/><rect x="1515" y="358" width="1" height="2" fill="#d4d4d4" fill-opacity="0.38"/><rect x="1502" y="360" width="2" height="2" fill="#569cd6" fill-opacity="0.38"/><rect x="1505" y="360" width="2" height="2" fill="#569cd6" fill-opacity="0.38"/><rect x="1508" y="360" width="7" height="2" fill="#9cdcfe" fill-opacity="0.38"/><rect x="1516" y="360" width="3" height="2" fill="#d4d4d4" fill-opacity="0.38"/><rect x="1502" y="362" width="7" height="2" fill="#d4d4d4" fill-opacity="0.38"/><rect x="1510" y="362" width="5" height="2" fill="#dcdcaa" fill-opacity="0.38"/><rect x="1516" y="362" width="6" height="2" fill="#d4d4d4" fill-opacity="0.38"/><rect x="1498" y="364" width="1" height="2" fill="#9cdcfe" fill-opacity="0.38"/><rect x="1498" y="366" width="7" height="2" fill="#d4d4d4" fill-opacity="0.38"/><rect x="1506" y="366" width="9" height="2" fill="#9cdcfe" fill-opacity="0.38"/><rect x="1516" y="366" width="4" height="2" fill="#569cd6" fill-opacity="0.38"/><rect x="1521" y="366" width="2" height="2" fill="#ce9178" fill-opacity="0.38"/><rect x="1494" y="368" width="1" height="2" fill="#dcdcaa" fill-opacity="0.38"/><rect x="1494" y="372" width="3" height="2" fill="#569cd6" fill-opacity="0.38"/><rect x="1498" y="372" width="4" height="2" fill="#ce9178" fill-opacity="0.38"/><rect x="1503" y="372" width="6" height="2" fill="#dcdcaa" fill-opacity="0.38"/><rect x="1510" y="372" width="6" height="2" fill="#569cd6" fill-opacity="0.38"/><rect x="1517" y="372" width="2" height="2" fill="#ce9178" fill-opacity="0.38"/><rect x="1520" y="372" width="1" height="2" fill="#d4d4d4" fill-opacity="0.38"/><rect x="1498" y="374" width="9" height="2" fill="#d4d4d4" fill-opacity="0.38"/><rect x="1508" y="374" width="9" height="2" fill="#9cdcfe" fill-opacity="0.38"/><rect x="1518" y="374" width="1" height="2" fill="#569cd6" fill-opacity="0.38"/><rect x="1494" y="376" width="1" height="2" fill="#569cd6" fill-opacity="0.38"/><rect x="1494" y="380" width="2" height="2" fill="#dcdcaa" fill-opacity="0.38"/><rect x="1497" y="380" width="4" height="2" fill="#9cdcfe" fill-opacity="0.38"/><rect x="1502" y="380" width="4" height="2" fill="#569cd6" fill-opacity="0.38"/><rect x="1507" y="380" width="3" height="2" fill="#569cd6" fill-opacity="0.38"/><rect x="1511" y="380" width="5" height="2" fill="#9cdcfe" fill-opacity="0.38"/><rect x="1517" y="380" width="7" height="2" fill="#9cdcfe" fill-opacity="0.38"/><rect x="1498" y="382" width="8" height="2" fill="#d4d4d4" fill-opacity="0.38"/><rect x="1507" y="382" width="4" height="2" fill="#d4d4d4" fill-opacity="0.38"/><rect x="1512" y="382" width="6" height="2" fill="#569cd6" fill-opacity="0.38"/><rect x="1519" y="382" width="1" height="2" fill="#ce9178" fill-opacity="0.38"/><rect x="1502" y="384" width="2" height="2" fill="#ce9178" fill-opacity="0.38"/><rect x="1505" y="384" width="9" height="2" fill="#ce9178" fill-opacity="0.38"/><rect x="1515" y="384" width="2" height="2" fill="#dcdcaa" fill-opacity="0.38"/><rect x="1518" y="384" width="6" height="2" fill="#ce9178" fill-opacity="0.38"/><rect x="1498" y="386" width="8" height="2" fill="#569cd6" fill-opacity="0.38"/><rect x="1502" y="388" width="9" height="2" fill="#9cdcfe" fill-opacity="0.38"/><rect x="1512" y="388" width="5" height="2" fill="#569cd6" fill-opacity="0.38"/><rect x="1518" y="388" width="6" height="2" fill="#9cdcfe" fill-opacity="0.38"/><rect x="1525" y="388" width="1" height="2" fill="#569cd6" fill-opacity="0.38"/><rect x="1498" y="390" width="1" height="2" fill="#ce9178" fill-opacity="0.38"/><rect x="1494" y="392" width="1" height="2" fill="#ce9178" fill-opacity="0.38"/><rect x="1490" y="394" width="2" height="2" fill="#9cdcfe" fill-opacity="0.38"/><rect x="1493" y="394" width="5" height="2" fill="#ce9178" fill-opacity="0.38"/><rect x="1490" y="398" width="6" height="2" fill="#9cdcfe" fill-opacity="0.38"/></svg>
<div class="abs" style="left:1602px;top:0;width:1px;height:931px;background:#2b2b2b"></div>
<div class="abs" style="left:1602px;top:275px;width:14px;height:183px;background:rgba(121,121,121,0.4)"></div>
<div class="abs" style="left:1602px;top:355px;width:14px;height:2px;background:#a0a0a0"></div>
<div class="abs" style="left:1612px;top:322px;width:4px;height:59px;background:#c72e2e"></div>
<div class="abs" style="left:1612px;top:388px;width:4px;height:6px;background:#c72e2e"></div>
<div class="abs" style="left:1612px;top:398px;width:4px;height:7px;background:#c72e2e"></div>
<div class="abs" style="left:1612px;top:410px;width:4px;height:6px;background:#c72e2e"></div>
<div class="abs" style="left:1612px;top:443px;width:4px;height:5px;background:#c72e2e"></div>
<div class="abs" style="left:1612px;top:450px;width:4px;height:11px;background:#c72e2e"></div>
<div class="abs" style="left:1612px;top:478px;width:4px;height:13px;background:#c72e2e"></div>
<div class="abs" style="left:1612px;top:513px;width:4px;height:10px;background:#c72e2e"></div>
<div class="abs" style="left:1612px;top:526px;width:4px;height:7px;background:#c72e2e"></div>
<div class="abs" style="left:1612px;top:558px;width:4px;height:5px;background:#c72e2e"></div>
<div class="abs" style="left:1612px;top:567px;width:4px;height:8px;background:#c72e2e"></div>
<div class="abs" style="left:1612px;top:588px;width:4px;height:6px;background:#c72e2e"></div>
<div class="abs" style="left:1612px;top:598px;width:4px;height:5px;background:#c72e2e"></div>
<div class="abs" style="left:1612px;top:618px;width:4px;height:13px;background:#c72e2e"></div>
<div class="abs" style="left:1612px;top:643px;width:4px;height:7px;background:#c72e2e"></div>
</div>
<div id="status" class="abs" style="padding-top:1px"><div class="abs" style="left:0;top:1px;width:1920px;height:22px">
<svg style="left:15px;top:4px" width="14" height="14" viewBox="0 0 14 14"><circle cx="7" cy="7" r="6" fill="none" stroke="#ffffff" stroke-width="1.2"/><path d="M4.5 4.5 L9.5 9.5 M9.5 4.5 L4.5 9.5" stroke="#ffffff" stroke-width="1.2"/></svg>
<div class="t" style="left:32.0px;top:1.0px;height:20px;line-height:20px;font-size:12.0px;color:#ffffff">66</div>
<svg style="left:49px;top:4px" width="13" height="13" viewBox="0 0 13 13"><path d="M6.5 1 L12.3 12 H0.7 Z" fill="none" stroke="#ffffff" stroke-width="1.2" stroke-linejoin="round"/><path d="M6.5 4.5 V8.5 M6.5 9.8 V10.8" stroke="#ffffff" stroke-width="1.2"/></svg>
<div class="t" style="left:65.5px;top:1.0px;height:20px;line-height:20px;font-size:12.0px;color:#ffffff">0</div>
<svg style="left:90px;top:3px" width="11" height="16" viewBox="0 0 11 16"><ellipse cx="5.3" cy="3" rx="4.5" ry="2" fill="none" stroke="#ffffff" stroke-width="1.2"/><path d="M0.8 3 V12.8 C0.8 14 3 14.8 5.3 14.8 C7.6 14.8 9.8 14 9.8 12.8 V3" fill="none" stroke="#ffffff" stroke-width="1.2"/></svg>
<div class="t" style="left:105.5px;top:1.0px;height:20px;line-height:20px;font-size:12.0px;color:#ffffff">Connect</div>
<div class="t" style="left:1462.0px;top:1.0px;height:20px;line-height:20px;font-size:12.0px;color:#ffffff;letter-spacing:-0.15px">Строка 96, столбец 46</div>
<div class="t" style="left:1599.0px;top:1.0px;height:20px;line-height:20px;font-size:12.0px;color:#ffffff">Пробелов: 4</div>
<div class="t" style="left:1683.0px;top:1.0px;height:20px;line-height:20px;font-size:12.0px;color:#ffffff;letter-spacing:-0.1px">UTF-8 with BOM</div>
<div class="t" style="left:1786.0px;top:1.0px;height:20px;line-height:20px;font-size:12.0px;color:#ffffff">LF</div>
<div class="t" style="left:1814.0px;top:1.0px;height:20px;line-height:20px;font-size:11.5px;color:#ffffff">HTML</div>
<svg style="left:1858px;top:3px" width="18" height="16" viewBox="0 0 18 16"><circle cx="8" cy="7.8" r="2.7" fill="none" stroke="#ffffff" stroke-width="1.2"/><path d="M3.6 14.6 C4.3 11.8 6 10.7 8 10.7 C10 10.7 11.7 11.8 12.4 14.6" fill="none" stroke="#ffffff" stroke-width="1.2"/><path d="M7.6 4.2 V1.6 H16.2 V7.3 H13.2 L11.8 8.7" fill="none" stroke="#ffffff" stroke-width="1.1"/></svg>
<svg style="left:1891px;top:4px" width="13" height="14" viewBox="0 0 13 14"><path d="M6.5 1 C3.8 1 2.5 3 2.5 5.5 V8.8 L0.8 11 H12.2 L10.5 8.8 V5.5 C10.5 3 9.2 1 6.5 1 Z M4.8 12.3 C5 13.2 5.6 13.6 6.5 13.6 C7.4 13.6 8 13.2 8.2 12.3" fill="none" stroke="#ffffff" stroke-width="1.2" stroke-linejoin="round"/></svg>
</div></div>
<div id="task" class="abs">
<svg style="left:16px;top:12px" width="17" height="17" viewBox="0 0 17 17"><path d="M0 2.4 L6.9 1.4 V7.9 H0 Z M7.8 1.3 L16.4 0 V7.9 H7.8 Z M0 8.8 H6.9 V15.4 L0 14.4 Z M7.8 8.8 H16.4 V16.7 L7.8 15.5 Z" fill="#ffffff"/></svg>
<div class="abs" style="left:198px;top:0;width:48px;height:40px;background:#434343"></div>
<div class="abs" style="left:55px;top:38px;width:40px;height:2px;background:#9bd4f5"></div>
<div class="abs" style="left:104px;top:38px;width:40px;height:2px;background:#9bd4f5"></div>
<div class="abs" style="left:153px;top:38px;width:40px;height:2px;background:#9bd4f5"></div>
<div class="abs" style="left:198px;top:38px;width:48px;height:2px;background:#9bd4f5"></div>
<div class="abs" style="left:251px;top:38px;width:40px;height:2px;background:#9bd4f5"></div>
<div class="abs" style="left:300px;top:38px;width:40px;height:2px;background:#9bd4f5"></div>
<svg style="left:63px;top:10px" width="23" height="20" viewBox="0 0 23 20"><path d="M1 1 H9 L10.5 2.5 H22.5 V18 H1 Z" fill="#e6a317"/><rect x="1" y="3.3" width="21.5" height="14.7" fill="#fdd267"/><path d="M5 11.2 H19.2 V19.5 H15.5 V14.8 H8.7 V19.5 H5 Z" fill="#3d97e3"/></svg>
<svg style="left:112px;top:8px" width="23" height="23" viewBox="0 0 23 23"><circle cx="11.5" cy="11.5" r="11" fill="#db4437"/><path d="M11.5 11.5 L22.3 8.5 A11 11 0 0 1 7 21.6 Z" fill="#f4c20d"/><path d="M11.5 11.5 L7 21.6 A11 11 0 0 1 1.2 6 Z" fill="#0f9d58"/><circle cx="11.5" cy="11.5" r="5.9" fill="#ffffff"/><circle cx="11.5" cy="11.5" r="4.7" fill="#3b7ee8"/></svg>
<svg style="left:155px;top:5px" width="35" height="30" viewBox="0 0 35 30"><polygon points="6,9.5 9.6,10.8 9.6,19.8 6,20.8" fill="#6446a6"/><polygon points="6,20.6 10.5,23.6 16.2,18 13.3,15.1" fill="#7452b4"/><polygon points="22.3,2.9 23.7,3.2 23.7,11.5 19,16.2 15.6,12.6" fill="#7452b4"/><polygon points="6,9.6 10.8,6.6 23.7,18.6 23.7,27.2 22.6,27.4" fill="#a67ddf"/><polygon points="23.7,3.2 30,7.1 30,22.8 23.7,27.2" fill="#c89cf6"/></svg>
<svg style="left:210px;top:8px" width="24" height="24" viewBox="0 0 100 100"><defs><clipPath id="vcr2"><rect x="72" y="0" width="30" height="100"/></clipPath></defs><path fill="#0e7fd0" d="M96.46 10.8 75.86.87a6.23 6.23 0 0 0-7.1 1.2L29.35 38.04 12.19 25.01a4.16 4.16 0 0 0-5.32.24L1.36 30.26a4.17 4.17 0 0 0 0 6.16L16.24 50 1.36 63.58a4.17 4.17 0 0 0 0 6.16l5.51 5.01a4.16 4.16 0 0 0 5.32.24l17.16-13.03 39.41 35.97a6.23 6.23 0 0 0 7.1 1.2l20.6-9.92A6.25 6.25 0 0 0 100 83.6V16.4a6.25 6.25 0 0 0-3.54-5.6zM75.02 72.7 45.11 50l29.91-22.7z"/><path fill="#27a6f2" clip-path="url(#vcr2)" d="M96.46 10.8 75.86.87a6.23 6.23 0 0 0-7.1 1.2L29.35 38.04 12.19 25.01a4.16 4.16 0 0 0-5.32.24L1.36 30.26a4.17 4.17 0 0 0 0 6.16L16.24 50 1.36 63.58a4.17 4.17 0 0 0 0 6.16l5.51 5.01a4.16 4.16 0 0 0 5.32.24l17.16-13.03 39.41 35.97a6.23 6.23 0 0 0 7.1 1.2l20.6-9.92A6.25 6.25 0 0 0 100 83.6V16.4a6.25 6.25 0 0 0-3.54-5.6zM75.02 72.7 45.11 50l29.91-22.7z"/></svg>
<svg style="left:260px;top:9px" width="22" height="22" viewBox="0 0 22 22"><circle cx="11" cy="11" r="10.5" fill="#2aa3df"/><path d="M4.5 10.8 L17 5.8 L15 16 L11 13.2 L9 15 L8.8 12 L14.5 7.5 L7.5 11.8 Z" fill="#ffffff"/></svg>
<div class="abs" style="left:269px;top:23px;width:16px;height:11px;background:#ef3b36;border-radius:2px;color:#fff;font-size:9px;line-height:11px;text-align:center;letter-spacing:-0.3px">..52</div>
<svg style="left:308px;top:8px" width="24" height="24" viewBox="0 0 24 24"><circle cx="12" cy="12" r="12" fill="#5865f2"/><g transform="translate(12 12.2) scale(1.15) translate(-11 -11)"><path d="M5.5 7 C7 6 8.3 5.7 9 5.7 L9.4 6.4 C10.5 6.2 11.5 6.2 12.6 6.4 L13 5.7 C13.7 5.7 15 6 16.5 7 C17.5 9 17.8 11.5 17.6 14 C16.5 15 15.3 15.5 14.3 15.8 L13.5 14.6 C12 15 10 15 8.5 14.6 L7.7 15.8 C6.7 15.5 5.5 15 4.4 14 C4.2 11.5 4.5 9 5.5 7 Z" fill="#ffffff"/><circle cx="8.7" cy="11.2" r="1.3" fill="#5865f2"/><circle cx="13.3" cy="11.2" r="1.3" fill="#5865f2"/></g></svg>
<svg style="left:1689px;top:12px" width="16" height="16" viewBox="0 0 16 16"><circle cx="8" cy="8" r="7.5" fill="#2a8ad8"/></svg>
<div class="abs" style="left:1694px;top:19px;width:11px;height:10px;background:#e53935;border-radius:2px;color:#fff;font-size:8px;line-height:10px;text-align:center">2</div>
<svg style="left:1713px;top:13px" width="16" height="13" viewBox="0 0 16 13"><path d="M2 3 C4 1.8 5.5 1.5 6 1.5 L6.5 2.3 C7.5 2.1 8.5 2.1 9.5 2.3 L10 1.5 C10.5 1.5 12 1.8 14 3 C15.2 5.5 15.5 8 15.2 10.5 C14 11.5 12.8 12 11.8 12.2 L11 11 C9 11.5 7 11.5 5 11 L4.2 12.2 C3.2 12 2 11.5 0.8 10.5 C0.5 8 0.8 5.5 2 3 Z" fill="#ffffff"/><circle cx="5.5" cy="7.3" r="1.2" fill="#141414"/><circle cx="10.5" cy="7.3" r="1.2" fill="#141414"/></svg>
<svg style="left:1722px;top:12px" width="6" height="6" viewBox="0 0 6 6"><circle cx="3" cy="3" r="2.8" fill="#e84a4a"/></svg>
<div class="abs" style="left:1737px;top:12px;width:16px;height:16px;background:#1e2a1e"></div>
<svg style="left:1739px;top:15px" width="12" height="9" viewBox="0 0 12 9"><path d="M0.8 4.5 C2.5 1.5 6 0.8 11 2 V8 C6 8.8 2.5 7.5 0.8 4.5 Z" fill="none" stroke="#76b900" stroke-width="1.3"/><circle cx="6" cy="4.5" r="1.6" fill="none" stroke="#76b900" stroke-width="1.1"/></svg>
<svg style="left:1763px;top:14px" width="14" height="13" viewBox="0 0 14 13"><path d="M1 12 A11 11 0 0 1 12 1 M3.5 12 A8.5 8.5 0 0 1 12 3.5 M6 12 A6 6 0 0 1 12 6 M8.5 12 A3.5 3.5 0 0 1 12 8.5" fill="none" stroke="#ffffff" stroke-width="0.9"/><circle cx="11.3" cy="11.3" r="1.3" fill="#fff"/></svg>
<svg style="left:1784px;top:13px" width="18" height="15" viewBox="0 0 18 15"><path d="M0.8 5 H3.8 L8 1 V14 L3.8 10 H0.8 Z" fill="none" stroke="#ffffff" stroke-width="1"/><path d="M10.5 5 A3 3 0 0 1 10.5 10 M12.5 3 A6 6 0 0 1 12.5 12 M14.5 1.2 A8.5 8.5 0 0 1 14.5 13.8" fill="none" stroke="#ffffff" stroke-width="1"/></svg>
<div class="t" style="left:1811.0px;top:10.0px;height:20px;line-height:20px;font-size:12.0px;color:#ffffff;letter-spacing:-0.4px">РУС</div>
<div class="t" style="left:1856.5px;top:1.0px;height:20px;line-height:20px;font-size:12.0px;color:#ffffff;letter-spacing:0.1px">0:29:28</div>
<div class="t" style="left:1848.0px;top:19.0px;height:20px;line-height:20px;font-size:12.0px;color:#ffffff">12.05.2022</div>
<div class="abs" style="left:1914px;top:0;width:1px;height:40px;background:#5a5a5a"></div>
</div>
<svg style="left:0;top:0" width="1920" height="1080"><defs><linearGradient id="wmg" x1="1357" y1="0" x2="1870" y2="0" gradientUnits="userSpaceOnUse"><stop offset="0" stop-color="rgb(100,105,235)"/><stop offset="1" stop-color="rgb(185,140,235)"/></linearGradient></defs><g opacity="0.34"><text x="1353" y="1015" font-family="Liberation Sans" font-weight="bold" font-size="99" textLength="521" lengthAdjust="spacingAndGlyphs" fill="url(#wmg)" stroke="url(#wmg)" stroke-width="2.5" stroke-linejoin="round">ragemp.pro</text></g><text x="1353" y="1015" font-family="Liberation Sans" font-weight="bold" font-size="99" textLength="521" lengthAdjust="spacingAndGlyphs" fill="none" stroke="#a0a0a0" stroke-opacity="0.5" stroke-width="1.5" stroke-linejoin="round">ragemp.pro</text></svg>
</body></html>
